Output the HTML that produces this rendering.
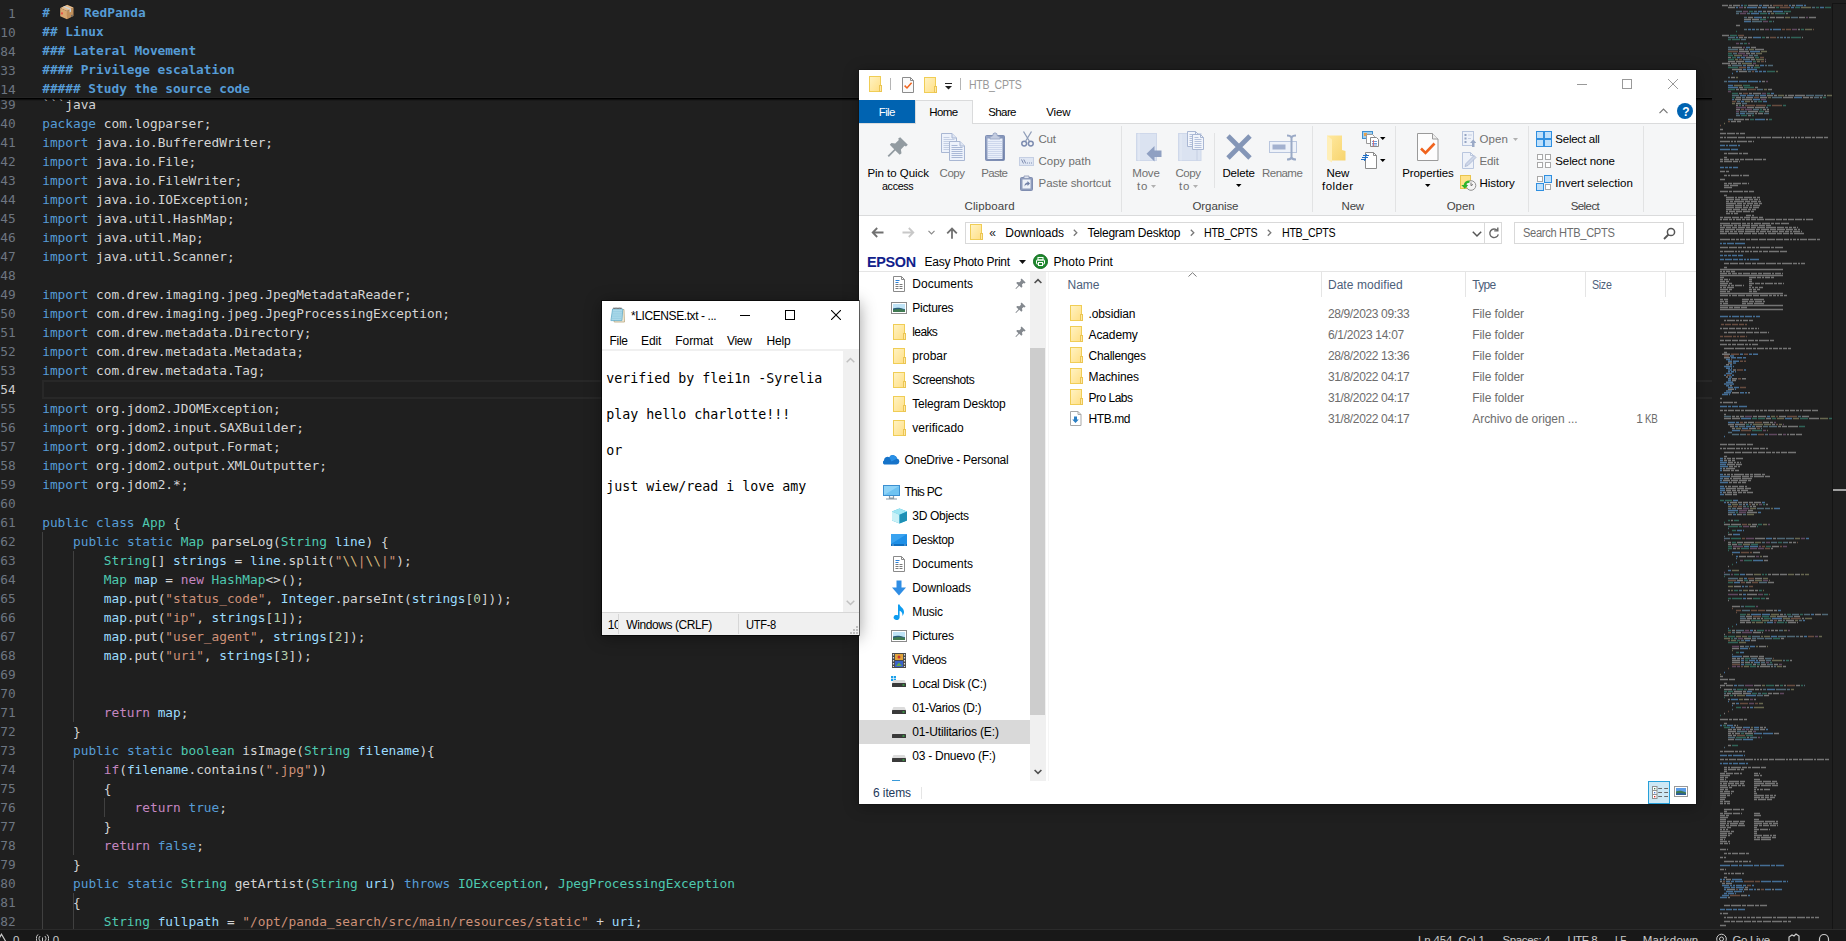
<!DOCTYPE html>
<html lang="en"><head><meta charset="utf-8"><title>screenshot</title>
<style>
html,body{margin:0;padding:0}
body{width:1846px;height:941px;background:#1f1f1f;position:relative;overflow:hidden;font-family:"Liberation Sans",sans-serif}
.b{position:absolute;display:block}
.t{position:absolute;white-space:pre;display:block}
.s{font-family:"Liberation Sans","DejaVu Sans",sans-serif}
.m{font-family:"Liberation Mono","DejaVu Sans Mono",monospace}
.d{font-family:"DejaVu Sans Mono","Liberation Mono",monospace}

#ed{position:absolute;left:0;top:0;width:1846px;height:941px;overflow:hidden}
.ln,.cl{position:absolute;margin:0;font-family:"DejaVu Sans Mono","Liberation Mono",monospace;font-size:12.8px;line-height:19px;height:19px;letter-spacing:-0.009px;white-space:pre}
.ln{left:-30px;width:45.61px;text-align:right;color:#6e7681}
.cl{left:42.2px;color:#d4d4d4}
.cl i{font-style:normal}
.cl.h{font-weight:700;color:#569cd6}
i.k{color:#569cd6} i.y{color:#4ec9b0} i.q{color:#ce9178} i.c{color:#c586c0} i.v{color:#9cdcfe} i.n{color:#b5cea8} i.e{color:#d7ba7d}
#sticky{position:absolute;left:0;top:0;width:1712px;height:98px;box-sizing:border-box;border-bottom:1px solid #242424;background:#1f1f1f;overflow:hidden}
#stsh{position:absolute;left:0;top:98px;width:1712px;height:3px;background:linear-gradient(#000 0,#000 33%,rgba(0,0,0,.55) 34%,rgba(0,0,0,.55) 66%,rgba(0,0,0,.16) 67%)}

#np{background:#fff;box-shadow:0 0 0 1px rgba(0,0,0,.57),0 2px 16px 0 rgba(0,0,0,.42);overflow:hidden;z-index:3}

#ex{background:#fff;box-shadow:0 0 0 1px rgba(0,0,0,.16),0 2px 14px 0 rgba(0,0,0,.35);overflow:hidden;z-index:2}
</style></head>
<body>
<div id="ed">
<div class="b" style="left:42px;top:380px;width:1670px;height:19px;border:2px solid #282828;border-right:none;box-sizing:border-box;"></div>
<div class="b" style="left:42px;top:532px;width:1px;height:399px;background:#404040;"></div>
<div class="b" style="left:73px;top:551px;width:1px;height:171px;background:#404040;"></div>
<div class="b" style="left:73px;top:760px;width:1px;height:95px;background:#404040;"></div>
<div class="b" style="left:73px;top:893px;width:1px;height:38px;background:#404040;"></div>
<div class="b" style="left:104px;top:798px;width:1px;height:19px;background:#404040;"></div>
<div class="ln" style="top:95.00px;color:#6e7681">439</div>
<pre class="cl" style="top:95.00px">```java</pre>
<div class="ln" style="top:114.00px;color:#6e7681">440</div>
<pre class="cl" style="top:114.00px"><i class="k">package</i> com.logparser;</pre>
<div class="ln" style="top:133.00px;color:#6e7681">441</div>
<pre class="cl" style="top:133.00px"><i class="k">import</i> java.io.BufferedWriter;</pre>
<div class="ln" style="top:152.00px;color:#6e7681">442</div>
<pre class="cl" style="top:152.00px"><i class="k">import</i> java.io.File;</pre>
<div class="ln" style="top:171.00px;color:#6e7681">443</div>
<pre class="cl" style="top:171.00px"><i class="k">import</i> java.io.FileWriter;</pre>
<div class="ln" style="top:190.00px;color:#6e7681">444</div>
<pre class="cl" style="top:190.00px"><i class="k">import</i> java.io.IOException;</pre>
<div class="ln" style="top:209.00px;color:#6e7681">445</div>
<pre class="cl" style="top:209.00px"><i class="k">import</i> java.util.HashMap;</pre>
<div class="ln" style="top:228.00px;color:#6e7681">446</div>
<pre class="cl" style="top:228.00px"><i class="k">import</i> java.util.Map;</pre>
<div class="ln" style="top:247.00px;color:#6e7681">447</div>
<pre class="cl" style="top:247.00px"><i class="k">import</i> java.util.Scanner;</pre>
<div class="ln" style="top:266.00px;color:#6e7681">448</div>
<div class="ln" style="top:285.00px;color:#6e7681">449</div>
<pre class="cl" style="top:285.00px"><i class="k">import</i> com.drew.imaging.jpeg.JpegMetadataReader;</pre>
<div class="ln" style="top:304.00px;color:#6e7681">450</div>
<pre class="cl" style="top:304.00px"><i class="k">import</i> com.drew.imaging.jpeg.JpegProcessingException;</pre>
<div class="ln" style="top:323.00px;color:#6e7681">451</div>
<pre class="cl" style="top:323.00px"><i class="k">import</i> com.drew.metadata.Directory;</pre>
<div class="ln" style="top:342.00px;color:#6e7681">452</div>
<pre class="cl" style="top:342.00px"><i class="k">import</i> com.drew.metadata.Metadata;</pre>
<div class="ln" style="top:361.00px;color:#6e7681">453</div>
<pre class="cl" style="top:361.00px"><i class="k">import</i> com.drew.metadata.Tag;</pre>
<div class="ln" style="top:380.00px;color:#ccc">454</div>
<div class="ln" style="top:399.00px;color:#6e7681">455</div>
<pre class="cl" style="top:399.00px"><i class="k">import</i> org.jdom2.JDOMException;</pre>
<div class="ln" style="top:418.00px;color:#6e7681">456</div>
<pre class="cl" style="top:418.00px"><i class="k">import</i> org.jdom2.input.SAXBuilder;</pre>
<div class="ln" style="top:437.00px;color:#6e7681">457</div>
<pre class="cl" style="top:437.00px"><i class="k">import</i> org.jdom2.output.Format;</pre>
<div class="ln" style="top:456.00px;color:#6e7681">458</div>
<pre class="cl" style="top:456.00px"><i class="k">import</i> org.jdom2.output.XMLOutputter;</pre>
<div class="ln" style="top:475.00px;color:#6e7681">459</div>
<pre class="cl" style="top:475.00px"><i class="k">import</i> org.jdom2.*;</pre>
<div class="ln" style="top:494.00px;color:#6e7681">460</div>
<div class="ln" style="top:513.00px;color:#6e7681">461</div>
<pre class="cl" style="top:513.00px"><i class="k">public</i> <i class="k">class</i> <i class="y">App</i> {</pre>
<div class="ln" style="top:532.00px;color:#6e7681">462</div>
<pre class="cl" style="top:532.00px">    <i class="k">public</i> <i class="k">static</i> <i class="y">Map</i> parseLog(<i class="y">String</i> <i class="v">line</i>) {</pre>
<div class="ln" style="top:551.00px;color:#6e7681">463</div>
<pre class="cl" style="top:551.00px">        <i class="y">String</i>[] <i class="v">strings</i> = <i class="v">line</i>.split(<i class="q">&quot;</i><i class="e">\\</i><i class="q">|</i><i class="e">\\</i><i class="q">|&quot;</i>);</pre>
<div class="ln" style="top:570.00px;color:#6e7681">464</div>
<pre class="cl" style="top:570.00px">        <i class="y">Map</i> <i class="v">map</i> = <i class="c">new</i> <i class="y">HashMap</i>&lt;&gt;();</pre>
<div class="ln" style="top:589.00px;color:#6e7681">465</div>
<pre class="cl" style="top:589.00px">        <i class="v">map</i>.put(<i class="q">&quot;status_code&quot;</i>, <i class="v">Integer</i>.parseInt(<i class="v">strings</i>[<i class="n">0</i>]));</pre>
<div class="ln" style="top:608.00px;color:#6e7681">466</div>
<pre class="cl" style="top:608.00px">        <i class="v">map</i>.put(<i class="q">&quot;ip&quot;</i>, <i class="v">strings</i>[<i class="n">1</i>]);</pre>
<div class="ln" style="top:627.00px;color:#6e7681">467</div>
<pre class="cl" style="top:627.00px">        <i class="v">map</i>.put(<i class="q">&quot;user_agent&quot;</i>, <i class="v">strings</i>[<i class="n">2</i>]);</pre>
<div class="ln" style="top:646.00px;color:#6e7681">468</div>
<pre class="cl" style="top:646.00px">        <i class="v">map</i>.put(<i class="q">&quot;uri&quot;</i>, <i class="v">strings</i>[<i class="n">3</i>]);</pre>
<div class="ln" style="top:665.00px;color:#6e7681">469</div>
<div class="ln" style="top:684.00px;color:#6e7681">470</div>
<div class="ln" style="top:703.00px;color:#6e7681">471</div>
<pre class="cl" style="top:703.00px">        <i class="c">return</i> <i class="v">map</i>;</pre>
<div class="ln" style="top:722.00px;color:#6e7681">472</div>
<pre class="cl" style="top:722.00px">    }</pre>
<div class="ln" style="top:741.00px;color:#6e7681">473</div>
<pre class="cl" style="top:741.00px">    <i class="k">public</i> <i class="k">static</i> <i class="y">boolean</i> isImage(<i class="y">String</i> <i class="v">filename</i>){</pre>
<div class="ln" style="top:760.00px;color:#6e7681">474</div>
<pre class="cl" style="top:760.00px">        <i class="c">if</i>(<i class="v">filename</i>.contains(<i class="q">&quot;.jpg&quot;</i>))</pre>
<div class="ln" style="top:779.00px;color:#6e7681">475</div>
<pre class="cl" style="top:779.00px">        {</pre>
<div class="ln" style="top:798.00px;color:#6e7681">476</div>
<pre class="cl" style="top:798.00px">            <i class="c">return</i> <i class="k">true</i>;</pre>
<div class="ln" style="top:817.00px;color:#6e7681">477</div>
<pre class="cl" style="top:817.00px">        }</pre>
<div class="ln" style="top:836.00px;color:#6e7681">478</div>
<pre class="cl" style="top:836.00px">        <i class="c">return</i> <i class="k">false</i>;</pre>
<div class="ln" style="top:855.00px;color:#6e7681">479</div>
<pre class="cl" style="top:855.00px">    }</pre>
<div class="ln" style="top:874.00px;color:#6e7681">480</div>
<pre class="cl" style="top:874.00px">    <i class="k">public</i> <i class="k">static</i> <i class="y">String</i> getArtist(<i class="y">String</i> <i class="v">uri</i>) <i class="k">throws</i> <i class="y">IOException</i>, <i class="y">JpegProcessingException</i></pre>
<div class="ln" style="top:893.00px;color:#6e7681">481</div>
<pre class="cl" style="top:893.00px">    {</pre>
<div class="ln" style="top:912.00px;color:#6e7681">482</div>
<pre class="cl" style="top:912.00px">        <i class="y">String</i> <i class="v">fullpath</i> = <i class="q">&quot;/opt/panda_search/src/main/resources/static&quot;</i> + <i class="v">uri</i>;</pre>
<div id="sticky">
<div class="ln" style="top:4.00px">1</div>
<pre class="cl h" style="top:3.00px"># </pre>
<pre class="cl h" style="top:3.00px;left:84.1px">RedPanda</pre>
<div class="ln" style="top:23.00px">210</div>
<pre class="cl h" style="top:22.00px">## Linux</pre>
<div class="ln" style="top:42.00px">284</div>
<pre class="cl h" style="top:41.00px">### Lateral Movement</pre>
<div class="ln" style="top:61.00px">333</div>
<pre class="cl h" style="top:60.00px">#### Privilege escalation</pre>
<div class="ln" style="top:80.00px">414</div>
<pre class="cl h" style="top:79.00px">##### Study the source code</pre>
<svg class="b" style="left:58.2px;top:3.2px;" width="17.5" height="17.5" viewBox="0 0 16 16"><title>📦</title><path d="M1.5 4.2 8.6 1l6 2.6v8.6L8 15.4 1.5 12.2z" fill="#1a1a1a"/>
<path d="M2 4.6 8.2 7.3v7.6L2 12z" fill="#d9a871"/><path d="M8.2 7.3 14.2 4.2v7.7l-6 3z" fill="#c08f5a"/>
<path d="M2 4.6 8.4 1.6l5.8 2.6-6 3.1z" fill="#e6bb8a"/><path d="M4.6 3.4 10.6 6v2.6l1.3-.7V5.3L6 2.7z" fill="#c9d3dc"/>
<rect x="3" y="8.6" width="1.3" height="1.8" fill="#e33"/><path d="M12 11.2l1.4-.7v1.6l-1.4.7z" fill="#666"/></svg>
</div>
<div id="stsh"></div>
</div>
<svg class="b" style="left:0;top:0" width="1846" height="930" viewBox="0 0 1846 930"><path d="M1722 5.5h6M1729 5.5h3M1733 5.5h7M1748 5.5h10M1763 5.5h6M1770 5.5h2M1792 5.5h3M1728 7.5h7M1744 7.5h2M1758 7.5h3M1768 7.5h7M1763 11.5h3M1767 11.5h5M1786 13.5h2M1748 17.5h5M1763 17.5h3M1770 17.5h5M1776 17.5h8M1799 17.5h6M1809 17.5h7M1744 19.5h7M1752 19.5h7M1736 25.5h4M1760 29.5h4M1798 29.5h2M1722 35.5h7M1739 37.5h4M1744 37.5h3M1748 37.5h4M1766 37.5h3M1802 37.5h1M1732 47.5h10M1751 47.5h5M1739 49.5h5M1755 49.5h9M1739 51.5h10M1746 53.5h4M1751 53.5h4M1728 57.5h3M1746 57.5h8M1751 59.5h4M1728 61.5h7M1736 61.5h8M1765 61.5h1M1722 63.5h8M1731 63.5h6M1738 63.5h3M1728 65.5h3M1747 65.5h7M1732 69.5h10M1739 71.5h8M1731 77.5h4M1762 81.5h3M1739 87.5h4M1755 87.5h3M1736 89.5h3M1740 89.5h7M1768 89.5h4M1739 93.5h3M1749 93.5h3M1753 93.5h8M1767 95.5h6M1774 95.5h3M1785 95.5h2M1788 95.5h6M1795 95.5h10M1824 95.5h2M1736 97.5h5M1746 97.5h7M1760 97.5h7M1783 97.5h10M1803 97.5h6M1810 97.5h3M1820 97.5h2M1735 99.5h6M1742 99.5h10M1751 101.5h2M1736 103.5h5M1736 105.5h2M1742 105.5h2M1747 107.5h7M1755 107.5h10M1736 109.5h4M1763 109.5h3M1767 109.5h2M1748 111.5h10M1765 111.5h4M1755 113.5h2M1758 113.5h5M1748 115.5h3M1734 119.5h10M1745 119.5h4M1766 119.5h2M1731 121.5h5M1737 121.5h4M1720 129.5h3M1720 133.5h6M1727 133.5h8M1736 133.5h3M1740 133.5h5M1720 137.5h3M1724 137.5h2M1727 137.5h10M1738 137.5h7M1746 137.5h10M1757 137.5h3M1761 137.5h10M1772 137.5h10M1783 137.5h2M1786 137.5h4M1791 137.5h3M1795 137.5h2M1798 137.5h2M1801 137.5h3M1805 137.5h6M1812 137.5h3M1816 137.5h7M1824 137.5h4M1720 141.5h10M1731 141.5h2M1734 141.5h2M1737 141.5h10M1748 141.5h4M1753 141.5h1M1724 153.5h3M1728 153.5h10M1739 153.5h3M1743 153.5h5M1724 157.5h3M1720 159.5h3M1724 159.5h5M1730 159.5h4M1735 159.5h4M1740 159.5h4M1745 159.5h8M1754 159.5h8M1763 159.5h3M1720 161.5h3M1724 161.5h8M1733 161.5h5M1739 161.5h1M1720 171.5h5M1726 171.5h3M1724 175.5h3M1728 175.5h2M1731 175.5h8M1740 175.5h2M1743 175.5h6M1720 179.5h5M1724 183.5h3M1728 183.5h4M1733 183.5h8M1742 183.5h5M1748 183.5h1M1724 185.5h5M1730 185.5h8M1724 187.5h8M1720 191.5h8M1729 191.5h3M1733 191.5h10M1744 191.5h4M1749 191.5h5M1724 195.5h3M1726 197.5h8M1735 197.5h2M1738 197.5h5M1744 197.5h8M1753 197.5h3M1757 197.5h3M1726 199.5h8M1735 199.5h5M1741 199.5h7M1749 199.5h4M1754 199.5h4M1759 199.5h1M1726 201.5h3M1730 201.5h3M1734 201.5h10M1745 201.5h5M1751 201.5h6M1758 201.5h3M1726 203.5h10M1737 203.5h5M1743 203.5h3M1747 203.5h6M1754 203.5h4M1759 203.5h3M1726 205.5h8M1735 205.5h7M1743 205.5h2M1746 205.5h3M1750 205.5h2M1753 205.5h7M1726 207.5h8M1735 207.5h7M1743 207.5h5M1749 207.5h3M1753 207.5h6M1726 209.5h6M1733 209.5h7M1741 209.5h6M1748 209.5h3M1752 209.5h4M1726 211.5h2M1729 211.5h6M1736 211.5h6M1743 211.5h7M1751 211.5h3M1726 213.5h4M1731 213.5h2M1734 213.5h4M1746 215.5h5M1752 215.5h2M1720 217.5h3M1724 217.5h7M1732 217.5h7M1740 217.5h3M1744 217.5h6M1751 217.5h7M1759 217.5h4M1720 219.5h2M1723 219.5h5M1729 219.5h3M1733 219.5h2M1736 219.5h5M1742 219.5h3M1746 219.5h4M1751 219.5h5M1757 219.5h7M1765 219.5h10M1776 219.5h6M1783 219.5h4M1788 219.5h6M1795 219.5h7M1803 219.5h2M1806 219.5h7M1720 223.5h10M1731 223.5h10M1742 223.5h4M1747 223.5h3M1751 223.5h2M1754 223.5h7M1762 223.5h8M1771 223.5h3M1775 223.5h5M1781 223.5h8M1720 225.5h2M1723 225.5h10M1734 225.5h3M1738 225.5h3M1742 225.5h8M1751 225.5h7M1759 225.5h6M1766 225.5h5M1720 227.5h5M1726 227.5h5M1732 227.5h5M1738 227.5h7M1746 227.5h4M1751 227.5h5M1757 227.5h8M1766 227.5h10M1777 227.5h7M1785 227.5h3M1789 227.5h3M1793 227.5h3M1797 227.5h1M1720 229.5h4M1725 229.5h10M1736 229.5h8M1745 229.5h10M1756 229.5h4M1761 229.5h8M1770 229.5h6M1777 229.5h8M1786 229.5h7M1794 229.5h3M1798 229.5h2M1720 231.5h4M1725 231.5h4M1730 231.5h3M1734 231.5h3M1738 231.5h6M1745 231.5h10M1756 231.5h3M1760 231.5h6M1767 231.5h4M1772 231.5h6M1779 231.5h5M1785 231.5h4M1790 231.5h2M1793 231.5h7M1801 231.5h1M1720 233.5h7M1728 233.5h10M1739 233.5h4M1744 233.5h7M1752 233.5h5M1758 233.5h6M1765 233.5h2M1768 233.5h8M1777 233.5h5M1783 233.5h6M1790 233.5h3M1794 233.5h10M1720 239.5h10M1731 239.5h4M1736 239.5h3M1740 239.5h5M1746 239.5h4M1751 239.5h7M1759 239.5h7M1767 239.5h8M1776 239.5h7M1784 239.5h5M1790 239.5h2M1793 239.5h3M1797 239.5h2M1800 239.5h7M1808 239.5h8M1817 239.5h3M1720 247.5h8M1729 247.5h8M1738 247.5h4M1743 247.5h3M1747 247.5h4M1752 247.5h3M1756 247.5h3M1760 247.5h10M1771 247.5h3M1775 247.5h8M1720 251.5h3M1724 251.5h10M1735 251.5h2M1738 251.5h2M1741 251.5h3M1745 251.5h4M1750 251.5h2M1753 251.5h5M1759 251.5h3M1763 251.5h5M1769 251.5h10M1780 251.5h7M1724 263.5h5M1730 263.5h8M1739 263.5h5M1745 263.5h6M1752 263.5h4M1757 263.5h8M1766 263.5h10M1777 263.5h4M1782 263.5h10M1793 263.5h4M1798 263.5h2M1801 263.5h4M1724 267.5h3M1720 269.5h63M1720 271.5h2M1723 271.5h2M1726 271.5h4M1731 271.5h4M1720 273.5h7M1728 273.5h3M1732 273.5h5M1738 273.5h4M1743 273.5h7M1751 273.5h6M1758 273.5h4M1763 273.5h8M1772 273.5h2M1775 273.5h6M1782 273.5h1M1720 275.5h63M1720 277.5h4M1749 277.5h7M1757 277.5h4M1762 277.5h2M1765 277.5h5M1771 277.5h3M1720 279.5h3M1724 279.5h4M1729 279.5h1M1749 279.5h3M1720 281.5h5M1726 281.5h3M1749 281.5h3M1720 283.5h8M1729 283.5h3M1749 283.5h5M1755 283.5h5M1761 283.5h3M1765 283.5h8M1774 283.5h3M1778 283.5h4M1783 283.5h1M1720 285.5h7M1728 285.5h2M1731 285.5h3M1735 285.5h7M1743 285.5h1M1749 285.5h3M1720 287.5h2M1723 287.5h3M1727 287.5h7M1749 287.5h2M1752 287.5h2M1755 287.5h3M1759 287.5h4M1720 289.5h8M1729 289.5h3M1749 289.5h3M1753 289.5h3M1757 289.5h3M1720 291.5h6M1727 291.5h3M1749 291.5h3M1753 291.5h4M1720 293.5h63M1720 295.5h8M1729 295.5h2M1732 295.5h5M1738 295.5h7M1746 295.5h6M1753 295.5h6M1760 295.5h8M1769 295.5h3M1773 295.5h3M1777 295.5h2M1780 295.5h3M1784 295.5h3M1720 299.5h3M1724 299.5h4M1742 299.5h7M1750 299.5h3M1754 299.5h10M1720 301.5h4M1725 301.5h3M1742 301.5h6M1749 301.5h5M1755 301.5h7M1763 301.5h2M1720 303.5h2M1723 303.5h5M1742 303.5h4M1747 303.5h6M1754 303.5h10M1720 305.5h63M1720 307.5h8M1729 307.5h4M1734 307.5h6M1741 307.5h6M1720 309.5h63M1724 320.5h2M1727 320.5h8M1736 320.5h3M1740 320.5h2M1743 320.5h5M1749 320.5h4M1720 328.5h2M1723 328.5h5M1729 328.5h6M1736 328.5h5M1742 328.5h5M1748 328.5h2M1751 328.5h3M1755 328.5h2M1758 328.5h1M1724 332.5h3M1728 332.5h8M1737 332.5h8M1746 332.5h7M1754 332.5h5M1760 332.5h7M1768 332.5h1M1720 340.5h4M1725 340.5h6M1732 340.5h6M1739 340.5h8M1748 340.5h6M1755 340.5h3M1759 340.5h10M1770 340.5h4M1720 344.5h7M1728 344.5h3M1732 344.5h4M1737 344.5h7M1745 344.5h3M1749 344.5h2M1752 344.5h6M1724 348.5h10M1735 348.5h10M1746 348.5h6M1753 348.5h3M1757 348.5h7M1765 348.5h3M1769 348.5h3M1773 348.5h5M1779 348.5h3M1783 348.5h4M1788 348.5h3M1724 352.5h3M1722 354.25h8M1724 357.75h6M1728 363h4M1726 364.75h3M1733 370h3M1726 377h2M1732 378.75h5M1742 378.75h4M1732 380.5h4M1730 385.75h2M1728 389.25h6M1732 392.75h7M1748 392.75h2M1720 398.5h2M1720 402.5h2M1723 402.5h10M1734 402.5h3M1720 410.5h3M1724 410.5h3M1728 410.5h6M1735 410.5h5M1741 410.5h3M1745 410.5h10M1756 410.5h3M1760 410.5h3M1764 410.5h3M1768 410.5h7M1776 410.5h8M1785 410.5h4M1790 410.5h5M1796 410.5h3M1800 410.5h2M1803 410.5h8M1812 410.5h6M1724 414.5h2M1732 416.5h3M1736 416.5h3M1740 416.5h4M1753 416.5h4M1758 416.5h8M1779 416.5h7M1802 416.5h7M1724 418.5h7M1732 418.5h8M1766 418.5h5M1809 418.5h10M1744 422.5h3M1748 422.5h6M1763 422.5h6M1770 422.5h3M1728 424.5h6M1735 424.5h10M1772 424.5h3M1730 426.5h4M1756 426.5h6M1778 426.5h3M1782 426.5h5M1788 426.5h10M1732 428.5h3M1749 428.5h7M1778 434.5h4M1787 434.5h2M1790 434.5h5M1796 434.5h6M1720 444.5h7M1728 444.5h7M1736 444.5h10M1747 444.5h6M1720 448.5h2M1723 448.5h3M1727 448.5h8M1736 448.5h4M1741 448.5h2M1744 448.5h2M1747 448.5h2M1750 448.5h2M1753 448.5h6M1760 448.5h5M1766 448.5h2M1724 452.5h10M1735 452.5h6M1742 452.5h10M1753 452.5h4M1758 452.5h7M1766 452.5h5M1772 452.5h3M1776 452.5h4M1781 452.5h6M1788 452.5h8M1724 456.5h3M1724 458.5h2M1727 458.5h4M1732 458.5h3M1736 458.5h7M1724 460.5h3M1728 460.5h3M1732 460.5h3M1728 462.5h5M1734 462.5h2M1737 462.5h2M1740 462.5h1M1727 464.5h8M1736 464.5h6M1729 466.5h4M1734 466.5h3M1738 466.5h2M1723 468.5h2M1726 468.5h9M1723 470.5h7M1731 470.5h3M1735 470.5h4M1724 474.5h2M1727 474.5h3M1731 474.5h2M1734 474.5h10M1745 474.5h4M1750 474.5h3M1754 474.5h7M1762 474.5h3M1731 476.5h10M1742 476.5h7M1750 476.5h3M1754 476.5h10M1765 476.5h5M1724 478.5h5M1730 478.5h2M1733 478.5h8M1742 478.5h10M1723 480.5h7M1731 480.5h7M1739 480.5h8M1748 480.5h3M1729 482.5h3M1733 482.5h4M1738 482.5h3M1742 482.5h4M1725 486.5h2M1728 486.5h3M1732 486.5h6M1739 486.5h5M1745 486.5h2M1726 488.5h10M1737 488.5h7M1745 488.5h6M1726 490.5h5M1732 490.5h4M1737 490.5h3M1741 490.5h7M1723 492.5h3M1727 492.5h5M1733 492.5h4M1738 492.5h4M1743 492.5h3M1747 492.5h6M1725 494.5h7M1733 494.5h4M1727 502.5h2M1730 502.5h7M1738 502.5h4M1743 502.5h5M1749 502.5h4M1754 502.5h7M1743 504.5h2M1752 504.5h3M1766 504.5h2M1750 506.5h2M1753 506.5h3M1737 508.5h5M1748 510.5h5M1747 512.5h10M1728 514.5h4M1737 514.5h5M1731 520.5h2M1724 524.5h6M1731 524.5h10M1752 524.5h5M1750 526.5h6M1728 534.5h4M1755 538.5h10M1773 538.5h3M1728 542.5h3M1737 542.5h6M1744 542.5h10M1789 542.5h3M1793 542.5h3M1728 544.5h3M1732 544.5h5M1772 546.5h7M1733 548.5h3M1771 548.5h2M1753 552.5h7M1739 556.5h7M1747 556.5h8M1763 556.5h5M1764 560.5h4M1728 566.5h1M1746 574.5h7M1768 574.5h3M1772 574.5h7M1780 574.5h7M1795 574.5h5M1755 578.5h7M1737 580.5h6M1749 580.5h5M1746 582.5h5M1768 582.5h6M1734 586.5h7M1728 590.5h2M1749 590.5h5M1755 590.5h3M1739 594.5h3M1747 594.5h10M1747 598.5h5M1766 598.5h3M1728 600.5h1M1732 606.5h8M1766 610.5h7M1774 610.5h3M1780 614.5h3M1815 614.5h6M1746 616.5h6M1777 616.5h10M1794 616.5h6M1747 618.5h5M1753 618.5h3M1757 618.5h3M1761 618.5h2M1802 618.5h2M1740 620.5h10M1770 620.5h3M1778 620.5h4M1786 620.5h8M1740 622.5h5M1746 622.5h5M1788 622.5h8M1797 622.5h1M1732 630.5h3M1754 630.5h2M1771 630.5h3M1775 630.5h3M1736 632.5h5M1753 632.5h8M1762 632.5h1M1724 634.5h1M1800 636.5h3M1744 638.5h7M1781 638.5h3M1751 640.5h5M1740 646.5h4M1759 646.5h7M1732 648.5h7M1743 656.5h6M1750 656.5h8M1759 656.5h5M1732 658.5h4M1737 658.5h3M1741 658.5h3M1758 658.5h6M1732 660.5h8M1759 660.5h6M1790 660.5h2M1732 662.5h8M1741 662.5h3M1745 662.5h5M1751 662.5h2M1753 664.5h3M1761 664.5h5M1774 664.5h4M1757 666.5h2M1760 666.5h10M1771 666.5h2M1783 666.5h3M1720 676.5h3M1720 679.5h8M1729 679.5h6M1724 683.5h3M1720 685.5h5M1726 685.5h7M1754 685.5h7M1775 685.5h4M1784 685.5h2M1796 685.5h4M1720 687.5h1M1724 689.5h8M1748 689.5h6M1755 689.5h4M1760 689.5h2M1734 691.5h8M1743 691.5h3M1727 693.5h4M1732 693.5h10M1743 693.5h8M1768 693.5h4M1773 693.5h6M1724 695.5h5M1734 695.5h2M1764 695.5h5M1728 699.5h2M1744 699.5h5M1754 699.5h2M1732 703.5h3M1747 707.5h2M1724 713.5h1M1720 719.5h8M1729 719.5h3M1733 719.5h5M1739 719.5h4M1744 719.5h3M1724 723.5h3M1734 725.5h2M1737 725.5h1M1736 727.5h6M1760 727.5h3M1764 727.5h2M1728 729.5h4M1733 729.5h3M1737 729.5h4M1750 729.5h3M1760 729.5h5M1728 731.5h8M1748 731.5h4M1728 733.5h3M1732 733.5h2M1735 733.5h5M1745 733.5h8M1774 733.5h5M1728 735.5h4M1733 735.5h3M1747 737.5h2M1728 739.5h6M1728 745.5h3M1720 751.5h3M1724 751.5h10M1735 751.5h3M1739 751.5h3M1743 751.5h2M1720 759.5h4M1725 759.5h3M1729 759.5h7M1737 759.5h7M1745 759.5h8M1754 759.5h2M1757 759.5h2M1760 759.5h2M1763 759.5h5M1769 759.5h5M1775 759.5h10M1786 759.5h2M1789 759.5h3M1793 759.5h5M1799 759.5h3M1803 759.5h10M1814 759.5h2M1817 759.5h7M1825 759.5h4M1724 767.5h3M1728 767.5h2M1731 767.5h10M1742 767.5h5M1748 767.5h3M1752 767.5h8M1761 767.5h5M1724 769.5h3M1728 769.5h8M1737 769.5h3M1741 769.5h3M1724 771.5h3M1720 773.5h5M1726 773.5h7M1734 773.5h5M1740 773.5h2M1754 773.5h4M1759 773.5h1M1720 775.5h10M1754 775.5h5M1760 775.5h2M1720 777.5h4M1725 777.5h3M1720 779.5h4M1725 779.5h1M1754 779.5h6M1720 781.5h8M1729 781.5h10M1740 781.5h5M1754 781.5h8M1763 781.5h8M1772 781.5h5M1720 783.5h2M1723 783.5h4M1728 783.5h6M1735 783.5h4M1740 783.5h4M1754 783.5h10M1765 783.5h10M1776 783.5h2M1720 785.5h7M1728 785.5h2M1731 785.5h6M1738 785.5h3M1742 785.5h3M1754 785.5h6M1761 785.5h10M1772 785.5h6M1720 787.5h8M1729 787.5h3M1754 787.5h3M1720 789.5h4M1725 789.5h3M1754 789.5h2M1757 789.5h2M1760 789.5h3M1764 789.5h6M1720 791.5h3M1724 791.5h6M1731 791.5h3M1754 791.5h2M1720 793.5h10M1731 793.5h1M1754 793.5h3M1720 795.5h6M1727 795.5h3M1754 795.5h10M1765 795.5h4M1770 795.5h3M1774 795.5h2M1720 797.5h6M1754 797.5h6M1761 797.5h3M1765 797.5h4M1770 797.5h5M1720 799.5h5M1754 799.5h3M1758 799.5h8M1767 799.5h5M1720 801.5h3M1724 801.5h6M1720 803.5h3M1724 803.5h2M1727 803.5h3M1724 811.5h3M1720 813.5h3M1724 813.5h8M1733 813.5h7M1741 813.5h1M1754 813.5h6M1720 815.5h5M1726 815.5h3M1754 815.5h7M1720 817.5h8M1720 819.5h6M1754 819.5h5M1720 821.5h6M1727 821.5h5M1733 821.5h6M1740 821.5h5M1754 821.5h10M1765 821.5h10M1776 821.5h2M1720 823.5h6M1727 823.5h2M1730 823.5h8M1739 823.5h5M1754 823.5h8M1763 823.5h5M1769 823.5h3M1773 823.5h5M1720 825.5h5M1726 825.5h3M1730 825.5h7M1738 825.5h7M1754 825.5h4M1759 825.5h3M1763 825.5h6M1770 825.5h6M1777 825.5h1M1720 827.5h6M1727 827.5h4M1754 827.5h3M1720 829.5h2M1723 829.5h2M1726 829.5h2M1754 829.5h5M1760 829.5h8M1769 829.5h1M1720 831.5h10M1731 831.5h3M1754 831.5h3M1720 833.5h7M1728 833.5h4M1754 833.5h3M1720 835.5h7M1728 835.5h2M1754 835.5h8M1763 835.5h6M1770 835.5h2M1773 835.5h3M1720 837.5h6M1754 837.5h2M1757 837.5h3M1761 837.5h10M1772 837.5h4M1720 839.5h3M1724 839.5h1M1754 839.5h6M1761 839.5h10M1720 841.5h7M1728 841.5h2M1720 843.5h3M1724 843.5h4M1729 843.5h1M1724 809.5h8M1733 809.5h7M1741 809.5h3M1720 849.5h6M1727 849.5h1M1724 853.5h3M1728 853.5h3M1732 853.5h6M1739 853.5h6M1746 853.5h3M1720 857.5h3M1724 857.5h2M1724 861.5h10M1735 861.5h3M1739 861.5h3M1743 861.5h5M1749 861.5h2M1720 869.5h4M1725 869.5h1M1724 873.5h3M1728 873.5h2M1731 873.5h3M1735 873.5h6M1742 873.5h2M1724 877.5h3M1726 879.5h5M1720 881.5h2M1722 883.5h3M1726 883.5h6M1745 887.5h3M1727 889.5h8M1744 889.5h4M1757 889.5h3M1772 889.5h2M1741 895.5h6M1728 897.5h2M1724 905.5h6M1731 905.5h10M1742 905.5h4M1747 905.5h7M1755 905.5h4M1760 905.5h7M1720 913.5h2M1723 913.5h5M1724 917.5h2M1727 917.5h6M1734 917.5h3M1738 917.5h4M1743 917.5h3M1747 917.5h3M1751 917.5h4M1756 917.5h5M1762 917.5h10M1773 917.5h3M1777 917.5h10M1788 917.5h8M1797 917.5h8M1806 917.5h4M1811 917.5h3M1815 917.5h4M1724 921.5h6M1731 921.5h4M1736 921.5h7M1744 921.5h7M1752 921.5h4M1757 921.5h5M1763 921.5h8M1772 921.5h10M1783 921.5h4M1788 921.5h3M1720 925.5h6" stroke="#a4a4a4" stroke-width="1.35" stroke-opacity="0.64" fill="none"/><path d="M1741 5.5h2M1759 5.5h3M1789 5.5h2M1796 5.5h7M1804 5.5h2M1736 7.5h2M1747 7.5h10M1762 7.5h5M1791 7.5h3M1820 7.5h4M1758 11.5h4M1773 11.5h10M1751 13.5h8M1768 13.5h2M1754 17.5h8M1744 21.5h7M1748 29.5h3M1752 29.5h3M1770 29.5h2M1773 29.5h8M1736 37.5h2M1753 37.5h8M1784 37.5h2M1746 47.5h4M1750 51.5h10M1737 57.5h3M1741 57.5h4M1745 61.5h7M1743 65.5h3M1760 65.5h4M1747 67.5h3M1751 67.5h2M1743 69.5h3M1747 69.5h10M1736 71.5h2M1755 71.5h3M1759 71.5h3M1763 71.5h3M1732 73.5h1M1728 81.5h10M1739 81.5h8M1748 81.5h10M1759 81.5h2M1728 85.5h5M1728 87.5h10M1771 93.5h3M1740 95.5h6M1747 95.5h7M1760 95.5h6M1794 97.5h8M1732 99.5h2M1753 99.5h7M1741 101.5h3M1763 101.5h4M1740 113.5h5M1755 119.5h10M1720 145.5h5M1726 145.5h2M1729 145.5h8M1738 145.5h2M1720 149.5h10M1731 149.5h7M1720 167.5h4M1725 167.5h3M1729 167.5h3M1733 167.5h5M1720 243.5h2M1723 243.5h3M1727 243.5h7M1735 243.5h10M1720 255.5h3M1724 255.5h3M1728 255.5h3M1732 255.5h5M1738 255.5h5M1720 259.5h4M1725 259.5h7M1733 259.5h5M1739 259.5h4M1744 259.5h2M1747 259.5h2M1750 259.5h9M1720 316.5h8M1729 316.5h2M1732 316.5h7M1740 316.5h4M1745 316.5h7M1753 316.5h2M1756 316.5h4M1740 354.25h3M1749 354.25h3M1753 354.25h5M1730 356h4M1731 357.75h5M1737 357.75h5M1743 357.75h3M1726 359.5h4M1728 361.25h4M1733 361.25h6M1733 363h3M1730 364.75h2M1724 366.5h8M1733 366.5h1M1726 368.25h4M1731 368.25h1M1728 370h4M1744 370h2M1728 371.75h2M1731 371.75h3M1735 371.75h1M1726 373.5h6M1724 375.25h2M1732 375.25h2M1729 377h3M1728 378.75h3M1728 380.5h3M1726 382.25h7M1724 384h10M1726 385.75h3M1728 387.5h5M1734 387.5h5M1735 389.25h1M1726 391h6M1724 392.75h7M1740 392.75h4M1745 392.75h2M1722 394.5h6M1729 394.5h1M1720 406.5h7M1728 406.5h3M1732 406.5h6M1739 406.5h8M1767 416.5h3M1741 418.5h10M1785 418.5h7M1728 422.5h7M1736 422.5h3M1735 426.5h3M1746 426.5h5M1752 426.5h3M1742 428.5h6M1732 430.5h8M1751 434.5h6M1724 436.5h1M1720 458.5h3M1720 460.5h3M1720 462.5h7M1720 464.5h6M1720 466.5h8M1720 468.5h2M1720 470.5h2M1720 474.5h3M1720 476.5h10M1720 478.5h3M1720 480.5h2M1720 482.5h8M1720 486.5h4M1720 488.5h5M1720 490.5h5M1720 492.5h2M1720 494.5h4M1733 500.5h5M1724 502.5h2M1762 502.5h3M1728 504.5h3M1746 504.5h2M1774 508.5h6M1728 510.5h10M1758 512.5h3M1733 514.5h3M1737 530.5h5M1743 530.5h1M1733 534.5h7M1766 538.5h6M1806 538.5h3M1744 546.5h5M1750 546.5h8M1732 552.5h8M1736 556.5h2M1753 560.5h10M1736 562.5h1M1728 570.5h3M1740 574.5h5M1744 578.5h3M1734 582.5h6M1742 586.5h2M1743 594.5h3M1743 598.5h3M1778 610.5h3M1751 614.5h10M1762 614.5h8M1811 614.5h3M1772 618.5h10M1803 620.5h2M1767 622.5h6M1736 624.5h1M1728 628.5h1M1750 630.5h3M1771 636.5h6M1804 636.5h3M1745 640.5h5M1750 646.5h5M1740 648.5h8M1740 652.5h4M1732 656.5h10M1741 660.5h3M1749 660.5h6M1756 660.5h2M1754 662.5h6M1741 664.5h3M1724 672.5h1M1734 685.5h3M1767 689.5h8M1747 691.5h5M1746 695.5h10M1731 699.5h7M1728 701.5h1M1736 703.5h3M1732 705.5h1M1750 707.5h3M1720 725.5h2M1727 725.5h6M1731 727.5h4M1743 727.5h7M1754 727.5h5M1766 729.5h2M1754 733.5h8M1763 733.5h10M1743 739.5h10M1720 755.5h7M1728 755.5h4M1733 755.5h10M1744 755.5h1M1720 763.5h2M1723 763.5h5M1729 763.5h3M1733 763.5h5M1739 763.5h6M1746 763.5h2M1720 865.5h10M1731 865.5h7M1739 865.5h3M1743 865.5h10M1754 865.5h5M1760 865.5h10M1771 865.5h4M1776 865.5h8M1720 879.5h2M1723 879.5h2M1732 879.5h10M1726 881.5h4M1731 881.5h3M1735 881.5h8M1761 881.5h10M1772 881.5h10M1783 881.5h3M1787 881.5h1M1722 885.5h7M1730 885.5h2M1733 885.5h2M1736 885.5h6M1743 885.5h3M1752 885.5h2M1724 887.5h6M1731 887.5h4M1736 887.5h8M1724 889.5h2M1739 889.5h4M1749 889.5h4M1754 889.5h2M1765 889.5h6M1775 889.5h7M1726 891.5h7M1734 891.5h8M1743 891.5h1M1724 893.5h3M1728 893.5h6M1735 893.5h1M1722 895.5h7M1748 895.5h2M1720 897.5h7M1720 909.5h5M1726 909.5h6M1733 909.5h4M1738 909.5h7" stroke="#5a9bd8" stroke-width="1.35" stroke-opacity="0.64" fill="none"/><path d="M1744 5.5h3M1776 7.5h3M1795 7.5h5M1816 7.5h3M1825 7.5h6M1749 11.5h4M1784 11.5h7M1760 13.5h7M1775 13.5h10M1767 17.5h2M1760 19.5h6M1769 21.5h3M1801 29.5h3M1736 31.5h1M1730 35.5h7M1762 37.5h3M1791 37.5h10M1728 39.5h3M1732 39.5h8M1744 43.5h3M1728 53.5h4M1728 55.5h5M1732 57.5h4M1755 57.5h4M1728 59.5h6M1753 61.5h3M1728 67.5h10M1754 67.5h6M1767 71.5h8M1743 85.5h7M1744 87.5h10M1728 89.5h7M1732 93.5h6M1767 93.5h3M1732 97.5h3M1823 97.5h3M1758 101.5h4M1739 105.5h2M1767 105.5h4M1783 105.5h3M1760 109.5h2M1759 111.5h5M1741 115.5h6M1752 115.5h2M1750 119.5h4M1769 119.5h3M1752 418.5h5M1758 418.5h7M1772 418.5h4M1800 418.5h8M1829 418.5h3M1746 424.5h3M1799 426.5h6M1752 430.5h10M1720 500.5h4M1725 500.5h7M1763 504.5h2M1747 506.5h2M1736 512.5h2M1728 520.5h2M1734 520.5h5M1724 522.5h1M1758 524.5h4M1728 526.5h10M1739 526.5h3M1757 526.5h1M1732 530.5h4M1728 532.5h1M1731 538.5h10M1732 542.5h4M1778 542.5h4M1738 544.5h4M1751 544.5h7M1728 546.5h4M1766 546.5h5M1728 548.5h4M1741 548.5h8M1728 550.5h1M1744 560.5h8M1732 564.5h1M1734 574.5h5M1762 574.5h2M1765 574.5h2M1724 576.5h1M1744 580.5h4M1728 582.5h5M1734 590.5h4M1759 590.5h3M1764 594.5h4M1728 598.5h3M1732 598.5h10M1753 598.5h7M1761 598.5h4M1745 606.5h10M1740 614.5h6M1787 614.5h4M1800 614.5h3M1762 616.5h7M1764 618.5h7M1751 620.5h10M1764 622.5h2M1777 622.5h7M1785 622.5h2M1732 626.5h1M1728 630.5h3M1757 630.5h7M1724 636.5h3M1728 636.5h7M1748 636.5h3M1731 638.5h2M1773 638.5h7M1737 640.5h3M1728 642.5h10M1736 652.5h3M1745 658.5h5M1745 660.5h3M1786 660.5h3M1770 662.5h2M1745 664.5h7M1757 664.5h3M1750 666.5h6M1766 685.5h8M1780 685.5h3M1801 685.5h2M1737 689.5h6M1744 689.5h3M1724 691.5h3M1728 691.5h5M1752 693.5h5M1762 693.5h5M1730 695.5h3M1724 697.5h1M1736 707.5h5M1720 715.5h1M1723 725.5h3M1724 727.5h6M1741 733.5h3M1746 735.5h7M1736 737.5h10M1761 737.5h1M1732 745.5h6" stroke="#3fa890" stroke-width="1.3" stroke-opacity="0.5" fill="none"/><path d="M1773 5.5h10M1784 5.5h4M1780 7.5h10M1782 29.5h3M1786 29.5h5M1813 29.5h1M1738 35.5h6M1770 37.5h6M1728 51.5h10M1760 57.5h4M1739 59.5h3M1761 61.5h3M1739 67.5h7M1752 71.5h2M1748 89.5h8M1743 93.5h5M1754 97.5h5M1732 101.5h4M1745 105.5h10M1756 105.5h10M1772 105.5h10M1741 109.5h3M1728 121.5h2M1720 125.5h1M1721 324.5h3M1725 324.5h6M1732 324.5h6M1739 324.5h5M1745 324.5h2M1720 336.5h3M1724 336.5h8M1733 336.5h3M1737 336.5h2M1740 336.5h5M1746 336.5h1M1731 354.25h8M1744 354.25h4M1724 356h5M1731 359.5h1M1740 361.25h3M1744 361.25h2M1737 370h6M1727 375.25h4M1738 378.75h3M1740 387.5h6M1776 416.5h2M1787 416.5h10M1740 422.5h3M1755 422.5h7M1776 424.5h2M1757 428.5h3M1741 430.5h10M1747 434.5h3M1758 434.5h6M1749 504.5h2M1733 506.5h4M1738 506.5h4M1742 524.5h5M1742 538.5h3M1797 542.5h1M1762 546.5h3M1780 546.5h2M1765 548.5h5M1741 552.5h8M1750 552.5h2M1748 578.5h6M1728 580.5h8M1741 582.5h4M1752 582.5h6M1749 586.5h4M1769 594.5h1M1732 608.5h1M1736 610.5h5M1751 610.5h6M1758 610.5h7M1736 612.5h1M1753 616.5h8M1791 618.5h10M1774 620.5h3M1728 632.5h3M1808 636.5h6M1728 640.5h2M1773 658.5h1M1732 664.5h8M1741 666.5h2M1728 668.5h1M1787 685.5h8M1740 703.5h8M1755 703.5h3M1728 711.5h1M1737 735.5h8M1723 881.5h2M1744 881.5h10M1755 881.5h5M1747 885.5h4M1736 889.5h2M1761 889.5h3M1730 895.5h10" stroke="#b07a60" stroke-width="1.3" stroke-opacity="0.5" fill="none"/><path d="M1739 7.5h4M1743 11.5h5M1740 13.5h6M1806 17.5h2M1763 21.5h5M1765 29.5h4M1792 29.5h5M1736 43.5h3M1748 43.5h2M1743 47.5h2M1738 53.5h7M1743 55.5h5M1765 59.5h1M1753 63.5h3M1766 81.5h2M1728 91.5h3M1762 93.5h4M1761 99.5h5M1736 107.5h10M1745 109.5h7M1736 111.5h3M1745 416.5h7M1774 422.5h2M1783 424.5h1M1763 430.5h3M1769 434.5h8M1783 434.5h3M1759 504.5h3M1743 508.5h6M1739 510.5h8M1739 512.5h7M1768 524.5h2M1743 526.5h6M1746 538.5h8M1801 538.5h4M1724 540.5h1M1766 542.5h4M1733 546.5h10M1759 546.5h2M1783 546.5h4M1750 548.5h7M1758 548.5h6M1756 556.5h3M1740 560.5h3M1724 572.5h1M1731 574.5h2M1763 580.5h5M1728 594.5h10M1758 594.5h5M1756 606.5h2M1774 622.5h2M1745 630.5h4M1765 630.5h2M1768 630.5h2M1788 630.5h2M1742 632.5h10M1815 636.5h3M1738 638.5h5M1732 646.5h7M1766 662.5h3M1779 664.5h3M1732 666.5h4M1737 666.5h3M1745 685.5h8M1780 693.5h4M1750 699.5h3M1749 703.5h5M1742 707.5h4M1742 729.5h3M1746 729.5h3M1753 731.5h3M1758 737.5h2" stroke="#a070a0" stroke-width="1.3" stroke-opacity="0.5" fill="none"/><path d="M1801 7.5h10M1771 13.5h3M1785 17.5h5M1805 29.5h7M1749 49.5h5M1761 51.5h6M1756 53.5h6M1734 55.5h8M1735 59.5h3M1756 59.5h8M1757 61.5h3M1742 63.5h10M1755 65.5h4M1776 71.5h2M1736 77.5h2M1734 85.5h8M1764 89.5h3M1778 95.5h6M1827 95.5h5M1768 97.5h3M1745 101.5h5M1732 103.5h3M1724 123.5h1M1771 416.5h4M1777 418.5h7M1793 418.5h6M1820 418.5h8M1753 424.5h10M1764 424.5h7M1779 424.5h3M1736 428.5h5M1767 430.5h1M1732 504.5h6M1756 504.5h2M1728 506.5h4M1750 508.5h6M1771 508.5h2M1747 514.5h7M1748 524.5h3M1763 524.5h4M1795 538.5h5M1755 542.5h6M1743 544.5h7M1737 548.5h3M1732 554.5h1M1760 556.5h2M1732 570.5h7M1754 574.5h7M1788 574.5h6M1801 574.5h3M1805 574.5h4M1739 578.5h4M1763 578.5h5M1755 580.5h7M1769 580.5h1M1728 586.5h5M1731 590.5h2M1743 590.5h5M1763 590.5h1M1747 614.5h3M1771 614.5h8M1770 616.5h6M1783 618.5h7M1805 618.5h7M1762 620.5h7M1795 620.5h3M1752 622.5h3M1756 622.5h7M1784 630.5h3M1736 636.5h5M1742 636.5h5M1761 636.5h2M1764 636.5h6M1819 636.5h3M1724 638.5h6M1731 640.5h5M1739 642.5h7M1756 646.5h2M1767 646.5h1M1749 648.5h1M1732 650.5h1M1772 660.5h10M1744 666.5h5M1777 666.5h5M1720 674.5h1M1762 685.5h3M1791 689.5h3M1737 695.5h8M1739 699.5h4M1759 703.5h4M1754 707.5h10M1751 727.5h2" stroke="#b0b080" stroke-width="1.3" stroke-opacity="0.5" fill="none"/><path d="M1812 7.5h3M1736 11.5h6M1754 11.5h3M1736 13.5h3M1747 13.5h3M1744 17.5h3M1791 17.5h7M1752 21.5h10M1773 21.5h1M1744 29.5h3M1756 29.5h3M1728 37.5h7M1777 37.5h2M1780 37.5h3M1787 37.5h3M1741 39.5h5M1740 43.5h3M1728 47.5h3M1728 49.5h10M1745 49.5h3M1733 53.5h4M1749 55.5h4M1754 55.5h4M1743 59.5h7M1732 65.5h10M1765 65.5h2M1768 65.5h5M1748 71.5h3M1728 77.5h2M1724 81.5h3M1757 89.5h6M1732 95.5h7M1755 95.5h4M1806 95.5h8M1815 95.5h8M1742 97.5h3M1772 97.5h10M1814 97.5h5M1737 101.5h3M1754 101.5h3M1742 103.5h5M1766 107.5h2M1753 109.5h6M1740 111.5h7M1736 113.5h3M1746 113.5h8M1764 113.5h5M1736 115.5h4M1728 119.5h5M1724 416.5h7M1798 416.5h3M1750 424.5h2M1739 426.5h6M1763 426.5h5M1769 426.5h8M1761 428.5h1M1728 432.5h4M1732 434.5h7M1740 434.5h6M1765 434.5h3M1739 504.5h3M1743 506.5h3M1728 508.5h3M1732 508.5h4M1757 508.5h7M1765 508.5h5M1728 512.5h7M1743 514.5h3M1728 528.5h1M1724 536.5h1M1724 538.5h6M1777 538.5h8M1786 538.5h8M1762 542.5h3M1771 542.5h6M1783 542.5h5M1736 558.5h1M1724 574.5h6M1728 578.5h10M1759 582.5h8M1745 586.5h3M1739 590.5h3M1741 606.5h3M1742 610.5h8M1784 614.5h2M1792 614.5h7M1804 614.5h6M1822 614.5h6M1740 616.5h5M1788 616.5h5M1740 618.5h6M1783 620.5h2M1799 620.5h3M1736 630.5h8M1779 630.5h4M1732 632.5h3M1752 636.5h8M1778 636.5h8M1787 636.5h8M1796 636.5h3M1734 638.5h3M1752 638.5h4M1757 638.5h7M1765 638.5h7M1741 640.5h3M1745 646.5h4M1732 654.5h1M1751 658.5h6M1765 658.5h7M1766 660.5h5M1783 660.5h2M1761 662.5h4M1767 664.5h6M1774 666.5h2M1738 685.5h6M1804 685.5h1M1733 689.5h3M1763 689.5h3M1776 689.5h10M1787 689.5h3M1724 693.5h2M1758 693.5h3M1757 695.5h6M1732 709.5h1M1754 729.5h5M1737 731.5h10M1728 737.5h7M1750 737.5h7M1735 739.5h7M1724 747.5h1" stroke="#7fb0cc" stroke-width="1.3" stroke-opacity="0.5" fill="none"/></svg>
<div class="b" style="left:1832px;top:3px;width:1px;height:926px;background:#141414;"></div>
<div class="b" style="left:1832px;top:3px;width:14px;height:1px;background:#141414;"></div>
<div class="b" style="left:1833px;top:489px;width:13px;height:2px;background:#a0a0a0;"></div>
<div class="b" style="left:0px;top:929px;width:1846px;height:12px;background:#181818;border-top:1px solid #2b2b2b;box-sizing:border-box;"></div>
<span class="t s" style="left:13.00px;top:932.31px;font-size:11.5px;line-height:16px;color:#ccc;">0</span>
<span class="t s" style="left:52.80px;top:932.31px;font-size:11.5px;line-height:16px;color:#ccc;">0</span>
<span class="t s" style="left:1418.00px;top:932.31px;font-size:11.5px;line-height:16px;letter-spacing:-0.134px;color:#ccc;">Ln 454, Col 1</span>
<span class="t s" style="left:1502.60px;top:932.31px;font-size:11.5px;line-height:16px;letter-spacing:-0.405px;color:#ccc;">Spaces: 4</span>
<span class="t s" style="left:1567.50px;top:932.31px;font-size:11.5px;line-height:16px;letter-spacing:-0.595px;color:#ccc;">UTF-8</span>
<span class="t s" style="left:1614.90px;top:932.31px;font-size:11.5px;line-height:16px;letter-spacing:-0.350px;color:#ccc;transform:scaleX(0.8645);transform-origin:0 0;">LF</span>
<span class="t s" style="left:1642.70px;top:932.31px;font-size:11.5px;line-height:16px;letter-spacing:0.350px;color:#ccc;">Markdown</span>
<span class="t s" style="left:1732.40px;top:932.31px;font-size:11.5px;line-height:16px;letter-spacing:-0.305px;color:#ccc;">Go Live</span>
<svg class="b" style="left:0px;top:933px;" width="12" height="12" viewBox="0 0 12 12"><path d="M1.500 1.200 7.500 11.500H-4.500z" stroke="#ccc" stroke-width="1.200" fill="none"/></svg>
<svg class="b" style="left:36px;top:933px;" width="13" height="12" viewBox="0 0 13 12"><path d="M2 9.500a5.500 5.500 0 0 1 0-8M11 9.500a5.500 5.500 0 0 0 0-8M4.200 8a3.200 3.200 0 0 1 0-5M8.800 8a3.200 3.200 0 0 0 0-5" stroke="#ccc" stroke-width="1" fill="none"/><path d="M6.500 4.500v8" stroke="#ccc"/></svg>
<svg class="b" style="left:1716px;top:933px;" width="11" height="11" viewBox="0 0 11 11"><circle cx="5.500" cy="6" r="4.800" stroke="#ccc" stroke-width="1" fill="none"/><circle cx="5.500" cy="6" r="2" stroke="#ccc" stroke-width="1" fill="none"/></svg>
<svg class="b" style="left:1788px;top:933px;" width="13" height="11" viewBox="0 0 13 11"><path d="M1 8V4l3-2 2 1 2-2 3 2v5" stroke="#ccc" stroke-width="1.200" fill="none"/></svg>
<svg class="b" style="left:1818px;top:933px;" width="12" height="11" viewBox="0 0 12 11"><path d="M1.500 11V6a4.500 4.500 0 0 1 9 0v5" stroke="#ccc" stroke-width="1.200" fill="none"/></svg>
<div id="ex" class="b" style="left:859px;top:70px;width:837px;height:734px">
<svg class="b" style="left:10px;top:6px;" width="13" height="16" viewBox="0 0 13 16"><defs><linearGradient id="fg" x1="0" y1="0" x2="1" y2="1"><stop offset="0" stop-color="#fff3c4"/><stop offset="1" stop-color="#ffdf85"/></linearGradient></defs>
<rect x=".5" y=".5" width="11" height="15" fill="url(#fg)" stroke="#f0cd55" stroke-width="1"/>
<rect x="10.5" y="9.5" width="2" height="6" fill="#ffe9a6" stroke="#ebc553" stroke-width="1"/></svg>
<div class="b" style="left:31px;top:8px;width:1px;height:12px;background:#b5b5b5;"></div>
<svg class="b" style="left:43px;top:7px;" width="12" height="16" viewBox="0 0 12 16"><path d="M.5.5h8l3 3v12H.5z" fill="#fafafa" stroke="#8c8c8c"/><path d="M8.5.5v3h3" fill="none" stroke="#8c8c8c"/><path d="M2.6 8.6 5 11 9.6 5.8" stroke="#f0641e" stroke-width="1.5" fill="none"/></svg>
<svg class="b" style="left:65px;top:7px;" width="13" height="16" viewBox="0 0 13 16"><defs><linearGradient id="fg" x1="0" y1="0" x2="1" y2="1"><stop offset="0" stop-color="#fff3c4"/><stop offset="1" stop-color="#ffdf85"/></linearGradient></defs>
<rect x=".5" y=".5" width="11" height="15" fill="url(#fg)" stroke="#f0cd55" stroke-width="1"/>
<rect x="10.5" y="9.5" width="2" height="6" fill="#ffe9a6" stroke="#ebc553" stroke-width="1"/></svg>
<div class="b" style="left:86px;top:13px;width:7px;height:1px;background:#222;"></div>
<svg class="b" style="left:86px;top:16px;" width="7" height="3.5" viewBox="0 0 7 3.5"><path d="M0 0h7L3.5 3.5z" fill="#222"/></svg>
<div class="b" style="left:101px;top:8px;width:1px;height:12px;background:#b5b5b5;"></div>
<span class="t s" style="left:109.80px;top:6.64px;font-size:12px;line-height:17px;letter-spacing:-0.350px;color:#999;transform:scaleX(0.8750);transform-origin:0 0;">HTB_CPTS</span>
<div class="b" style="left:718px;top:14px;width:10px;height:1px;background:#999;"></div>
<div class="b" style="left:763px;top:9px;width:10px;height:10px;border:1px solid #999;box-sizing:border-box;"></div>
<svg class="b" style="left:809px;top:9px;" width="10" height="10" viewBox="0 0 10 10"><path d="M0 0 10 10M10 0 0 10" stroke="#999" stroke-width="1"/></svg>
<div class="b" style="left:0px;top:30px;width:56px;height:23px;background:#0063b1;"></div>
<span class="t s" style="left:19.70px;top:34.31px;font-size:11.5px;line-height:16px;letter-spacing:-0.576px;color:#fff;">File</span>
<div class="b" style="left:56px;top:30px;width:58px;height:24px;background:#f5f6f7;border:1px solid #dadbdc;border-bottom:none;box-sizing:border-box;"></div>
<span class="t s" style="left:70.20px;top:34.31px;font-size:11.5px;line-height:16px;letter-spacing:-0.561px;color:#000;">Home</span>
<span class="t s" style="left:129.30px;top:34.31px;font-size:11.5px;line-height:16px;letter-spacing:-0.620px;color:#000;">Share</span>
<span class="t s" style="left:187.20px;top:34.31px;font-size:11.5px;line-height:16px;letter-spacing:-0.116px;color:#000;">View</span>
<svg class="b" style="left:800px;top:38px;" width="9" height="6" viewBox="0 0 9 6"><path d="M.5 5.2 4.5 1.2 8.5 5.2" stroke="#777" stroke-width="1.2" fill="none"/></svg>
<div class="b" style="left:818px;top:33px;width:16px;height:16px;background:#0063b1;border-radius:50%;"></div>
<span class="t s" style="left:823.20px;top:33.64px;font-size:12px;line-height:17px;color:#fff;font-weight:700;">?</span>
<div class="b" style="left:0px;top:53px;width:837px;height:93px;background:#f5f6f7;border-top:1px solid #dadbdc;border-bottom:1px solid #dadbdc;box-sizing:border-box;"></div>
<div class="b" style="left:57px;top:53px;width:56px;height:1px;background:#f5f6f7;"></div>
<div class="b" style="left:262px;top:56px;width:1px;height:86px;background:#e2e3e4;"></div>
<div class="b" style="left:453px;top:56px;width:1px;height:86px;background:#e2e3e4;"></div>
<div class="b" style="left:536px;top:56px;width:1px;height:86px;background:#e2e3e4;"></div>
<div class="b" style="left:669px;top:56px;width:1px;height:86px;background:#e2e3e4;"></div>
<div class="b" style="left:784px;top:56px;width:1px;height:86px;background:#e2e3e4;"></div>
<div class="b" style="left:355px;top:63px;width:1px;height:55px;background:#e2e3e4;"></div>
<span class="t s" style="left:105.50px;top:128.31px;font-size:11.5px;line-height:16px;letter-spacing:0.123px;color:#444;">Clipboard</span>
<span class="t s" style="left:333.50px;top:128.31px;font-size:11.5px;line-height:16px;letter-spacing:-0.095px;color:#444;">Organise</span>
<span class="t s" style="left:482.50px;top:128.31px;font-size:11.5px;line-height:16px;letter-spacing:-0.167px;color:#444;">New</span>
<span class="t s" style="left:587.70px;top:128.31px;font-size:11.5px;line-height:16px;letter-spacing:-0.043px;color:#444;">Open</span>
<span class="t s" style="left:711.70px;top:128.31px;font-size:11.5px;line-height:16px;letter-spacing:-0.572px;color:#444;">Select</span>
<svg class="b" style="left:28px;top:66px;" width="22" height="22" viewBox="0 0 22 22"><path d="M13.2 1.2 20.8 8.8 19 10.4l-1.5-.6-3.6 3.6.6 3.8-1.8 1.6-4.4-4.4-6.4 6.6-1.3-1.3 6.6-6.4L2.8 8.7l1.6-1.8 3.8.6L11.8 4l-.6-1.5z" fill="#929ba1"/></svg>
<span class="t s" style="left:8.40px;top:95.31px;font-size:11.5px;line-height:16px;letter-spacing:-0.038px;color:#000;">Pin to Quick</span>
<span class="t s" style="left:23.10px;top:108.31px;font-size:11.5px;line-height:16px;letter-spacing:-0.350px;color:#000;transform:scaleX(0.9284);transform-origin:0 0;">access</span>
<svg class="b" style="left:82px;top:63px;" width="16" height="20" viewBox="0 0 16 20"><path d="M.5.5h10.500l4.500 4.500v14.500H.5z" fill="#edf2fb" stroke="#a9b7d3"/><path d="M11 .5v4.500h4.500" fill="#dfe6f4" stroke="#a9b7d3"/><path d="M2.500 4.500h6M2.500 6.500h11M2.500 8.500h11M2.500 10.500h11M2.500 12.500h11M2.500 14.500h11M2.500 16.500h11" stroke="#c4cfe4" stroke-width="1"/></svg>
<svg class="b" style="left:90px;top:71px;" width="16" height="20" viewBox="0 0 16 20"><path d="M.5.5h10.500l4.500 4.500v14.500H.5z" fill="#edf2fb" stroke="#a9b7d3"/><path d="M11 .5v4.500h4.500" fill="#dfe6f4" stroke="#a9b7d3"/><path d="M2.500 4.500h6M2.500 6.500h11M2.500 8.500h11M2.500 10.500h11M2.500 12.500h11M2.500 14.500h11M2.500 16.500h11" stroke="#a9b8d6" stroke-width="1"/></svg>
<span class="t s" style="left:80.60px;top:95.31px;font-size:11.5px;line-height:16px;letter-spacing:-0.480px;color:#707070;">Copy</span>
<svg class="b" style="left:126px;top:62px;" width="20" height="29" viewBox="0 0 20 29"><defs><linearGradient id="pb" x1="0" y1="0" x2="1" y2="1"><stop offset="0" stop-color="#9aa9ca"/><stop offset="1" stop-color="#6f80a8"/></linearGradient></defs><rect x=".5" y="3.5" width="19" height="25" rx="1" fill="url(#pb)" stroke="#7f8fb4"/><rect x="2.5" y="6.5" width="15" height="20.5" fill="#e9effa"/><path d="M3 9.5h14M3 11.5h14M3 13.5h14M3 15.5h14M3 17.5h14M3 19.5h14M3 21.5h14M3 23.5h14M3 25.5h14" stroke="#cdd7ec"/><path d="M5 7V5l3-1.500V1.800Q10 -.2 12 1.800V3.500L15 5v2z" fill="#c3cce0" stroke="#95a3c2" stroke-width=".8"/></svg>
<span class="t s" style="left:122.30px;top:95.31px;font-size:11.5px;line-height:16px;letter-spacing:-0.726px;color:#707070;">Paste</span>
<svg class="b" style="left:162px;top:61px;" width="13" height="16" viewBox="0 0 13 16"><path d="M2.5.5 8.3 10M10.5.5 4.7 10" stroke="#8f9db8" stroke-width="1.3" fill="none"/><circle cx="3.2" cy="12.6" r="2.4" fill="none" stroke="#7d8cb0" stroke-width="1.5"/><circle cx="9.8" cy="12.6" r="2.4" fill="none" stroke="#7d8cb0" stroke-width="1.5"/></svg>
<span class="t s" style="left:179.60px;top:61.31px;font-size:11.5px;line-height:16px;letter-spacing:-0.297px;color:#707070;">Cut</span>
<svg class="b" style="left:160px;top:87px;" width="15" height="9" viewBox="0 0 15 9"><rect x=".5" y=".5" width="14" height="8" fill="#dfe6f3" stroke="#c5cfe3"/><path d="M2.5 2.5 4.5 6.5M4.8 2.5 6.8 6.5" stroke="#7f8db0" stroke-width="1"/><path d="M8 6h1M10 6h1M12 6h1" stroke="#7f8db0"/></svg>
<span class="t s" style="left:179.60px;top:83.31px;font-size:11.5px;line-height:16px;letter-spacing:-0.029px;color:#707070;">Copy path</span>
<svg class="b" style="left:161px;top:105px;" width="13" height="16" viewBox="0 0 13 16"><rect x=".5" y="2.5" width="12" height="13" rx="1" fill="#8e9cbc" stroke="#7f8db0"/><rect x="2.5" y="4.5" width="8" height="9" fill="#eef2f9"/><path d="M4 1h5v2.5H4z" fill="#dfe5f0" stroke="#8996b4" stroke-width=".8"/><path d="M4.5 11.5c0-3 1.5-4 3-4V6l2.5 2.5L7.5 11V9.500c-1.200 0-2.200.5-3 2z" fill="#6f7fa6"/></svg>
<span class="t s" style="left:179.60px;top:105.31px;font-size:11.5px;line-height:16px;letter-spacing:-0.085px;color:#707070;">Paste shortcut</span>
<svg class="b" style="left:277px;top:63px;" width="27" height="29" viewBox="0 0 27 29"><rect x=".5" y=".5" width="20" height="27" fill="#dbe3f1" stroke="#cfd8ea"/><rect x="2.500" y=".5" width="1" height="27" fill="#e9eef7"/><path d="M25.500 17.500v6.500H18.500v4.500L10.500 20.800 18.500 13v4.500z" fill="#8fa0c2"/></svg>
<span class="t s" style="left:273.30px;top:95.31px;font-size:11.5px;line-height:16px;letter-spacing:-0.206px;color:#707070;">Move</span>
<span class="t s" style="left:278.10px;top:108.31px;font-size:11.5px;line-height:16px;letter-spacing:0.809px;color:#707070;">to</span>
<svg class="b" style="left:292px;top:115px;" width="5" height="3" viewBox="0 0 5 3"><path d="M0 0h5L2.5 3z" fill="#b0b0b0"/></svg>
<svg class="b" style="left:319px;top:61px;" width="27" height="31" viewBox="0 0 27 31"><rect x=".5" y="2.5" width="22.5" height="27" fill="#dbe3f1" stroke="#cfd8ea"/><rect x="18.5" y="17" width="1" height="12.5" fill="#c6d0e4"/><rect x="2.5" y="3" width="1" height="26.5" fill="#e6ecf6"/><g transform="translate(9,0)"><path d="M.5.5h8l3 3v12H.5z" fill="#f2f5fb" stroke="#a9b7d3"/><path d="M8.500.5v3h3" fill="none" stroke="#a9b7d3"/><path d="M2.500 3.500h4M2.500 5.500h7M2.500 7.500h7M2.500 9.500h7M2.500 11.500h7M2.500 13.500h7" stroke="#b4c1dc" stroke-width="1"/></g><g transform="translate(14,3)"><path d="M.5.5h8l3 3v12H.5z" fill="#f2f5fb" stroke="#a9b7d3"/><path d="M8.500.5v3h3" fill="none" stroke="#a9b7d3"/><path d="M2.500 3.500h4M2.500 5.500h7M2.500 7.500h7M2.500 9.500h7M2.500 11.500h7M2.500 13.500h7" stroke="#b4c1dc" stroke-width="1"/></g></svg>
<span class="t s" style="left:316.50px;top:95.31px;font-size:11.5px;line-height:16px;letter-spacing:-0.447px;color:#707070;">Copy</span>
<span class="t s" style="left:319.90px;top:108.31px;font-size:11.5px;line-height:16px;letter-spacing:1.009px;color:#707070;">to</span>
<svg class="b" style="left:334px;top:115px;" width="5" height="3" viewBox="0 0 5 3"><path d="M0 0h5L2.5 3z" fill="#b0b0b0"/></svg>
<svg class="b" style="left:367px;top:64px;" width="26" height="26" viewBox="0 0 26 26"><path d="M2 2 24 24M24 2 2 24" stroke="#8496b7" stroke-width="4.8"/></svg>
<span class="t s" style="left:363.50px;top:95.31px;font-size:11.5px;line-height:16px;letter-spacing:-0.189px;color:#000;">Delete</span>
<svg class="b" style="left:377px;top:114px;" width="5.5" height="3" viewBox="0 0 5.5 3"><path d="M0 0h5.5L2.75 3z" fill="#000"/></svg>
<svg class="b" style="left:410px;top:64px;" width="29" height="27" viewBox="0 0 29 27"><rect x=".5" y="7.500" width="27" height="11" fill="#eef2f9" stroke="#b9c6de"/><rect x="3.500" y="10.500" width="13" height="5" fill="#a3b1cf"/><path d="M18 1.500c2.500 0 4 .8 4.500 2 .5-1.200 2-2 4.500-2M18 25.500c2.500 0 4-.8 4.500-2 .5 1.200 2 2 4.500 2M22.500 3.500v20" stroke="#9aa9c6" stroke-width="2" fill="none"/></svg>
<span class="t s" style="left:403.10px;top:95.31px;font-size:11.5px;line-height:16px;letter-spacing:-0.554px;color:#707070;">Rename</span>
<svg class="b" style="left:467px;top:64px;" width="21" height="29" viewBox="0 0 21 29"><defs><linearGradient id="nf" x1="0" y1="0" x2="1" y2="1"><stop offset="0" stop-color="#ffe9a0"/><stop offset="1" stop-color="#f7d46e"/></linearGradient></defs>
<path d="M1 1.500h15v14.500l3.500 1v9.500H5z" fill="url(#nf)"/><path d="M1 1.500 6 5.500v23L1 25.500z" fill="#ffefb8"/></svg>
<span class="t s" style="left:467.60px;top:95.31px;font-size:11.5px;line-height:16px;letter-spacing:-0.167px;color:#000;">New</span>
<span class="t s" style="left:463.00px;top:108.31px;font-size:11.5px;line-height:16px;letter-spacing:0.448px;color:#000;">folder</span>
<svg class="b" style="left:503px;top:61px;" width="17" height="16" viewBox="0 0 17 16"><rect x=".5" y=".5" width="10" height="7" fill="#9fd0ee" stroke="#3f8fd0"/><rect x="2" y="2" width="3" height="3" fill="#e8a04a"/><path d="M4.500 3.500h6l2 2v7h-8z" fill="#fff" stroke="#9a9a9a"/><path d="M8.500 6.500h6l2 2v7h-8z" fill="#fff" stroke="#8a8a8a"/><path d="M10 10.500h5M10 12.500h5M10 14h5" stroke="#5b8fd9" stroke-width=".9"/><path d="M11.500 9v6.500" stroke="#e06060" stroke-width=".8"/></svg>
<svg class="b" style="left:521px;top:67px;" width="5.5" height="3" viewBox="0 0 5.5 3"><path d="M0 0h5.5L2.75 3z" fill="#000"/></svg>
<svg class="b" style="left:502px;top:82px;" width="17" height="17" viewBox="0 0 17 17"><path d="M4.500.5h8l3 3v13h-11z" fill="#fff" stroke="#8a8a8a"/><path d="M12.500.5v3h3" fill="none" stroke="#8a8a8a"/><path d="M2 3.500h6M1 5.500h6M0 7.500h5" stroke="#1e6fc8" stroke-width="1.100"/><path d="M5.500 2 3.500 9" stroke="#1e6fc8" stroke-width="1"/></svg>
<svg class="b" style="left:521px;top:89px;" width="5.5" height="3" viewBox="0 0 5.5 3"><path d="M0 0h5.5L2.75 3z" fill="#000"/></svg>
<svg class="b" style="left:558px;top:63px;" width="22" height="28" viewBox="0 0 22 28"><path d="M.5.5h15l5.500 5.500v21.500H.5z" fill="#fdfdfd" stroke="#9a9a9a"/><path d="M15.500.5v5.500h5.500" fill="#eee" stroke="#9a9a9a"/><path d="M4 15.500 8.500 20 17.500 10.500" stroke="#f0641e" stroke-width="2.600" fill="none"/></svg>
<span class="t s" style="left:543.30px;top:95.31px;font-size:11.5px;line-height:16px;letter-spacing:-0.113px;color:#000;">Properties</span>
<svg class="b" style="left:566px;top:114px;" width="5.5" height="3" viewBox="0 0 5.5 3"><path d="M0 0h5.5L2.75 3z" fill="#000"/></svg>
<svg class="b" style="left:603px;top:61px;" width="14" height="16" viewBox="0 0 14 16"><rect x=".5" y=".5" width="11" height="14" fill="#eef2f9" stroke="#b9c6de"/><path d="M2.500 3h2v2h-2zM2.500 6.500h2v2h-2zM2.500 10h2v2h-2z" fill="#96a5c4"/><path d="M6 4h4M6 7.500h3" stroke="#c5cfe3"/><path d="M10 16v-4H8l3.200-3.500L14.500 12h-2v4z" fill="#9aa9c6"/></svg>
<span class="t s" style="left:620.60px;top:61.31px;font-size:11.5px;line-height:16px;letter-spacing:0.057px;color:#707070;">Open</span>
<svg class="b" style="left:654px;top:68px;" width="5" height="3" viewBox="0 0 5 3"><path d="M0 0h5L2.5 3z" fill="#b0b0b0"/></svg>
<svg class="b" style="left:603px;top:82px;" width="15" height="17" viewBox="0 0 15 17"><path d="M.5.5h8l3 3v13h-11z" fill="#eef2f9" stroke="#b9c6de"/><path d="M8.500.5v3h3" fill="none" stroke="#b9c6de"/><path d="M3 14.500 4 11.500 12 3.500 14 5.500 6 13.500z" fill="#cdd6e8" stroke="#a9b6d2" stroke-width=".8"/></svg>
<span class="t s" style="left:620.60px;top:83.31px;font-size:11.5px;line-height:16px;letter-spacing:-0.171px;color:#707070;">Edit</span>
<svg class="b" style="left:601px;top:105px;" width="17" height="17" viewBox="0 0 17 17"><rect x=".5" y=".5" width="10" height="13" fill="#ffe38a" stroke="#e9c44f"/><circle cx="11" cy="10.500" r="4.800" fill="#f4f4f4" stroke="#8f8f8f"/><path d="M11 7.500v3.200l2-1.300" stroke="#666" stroke-width=".9" fill="none"/><path d="M9.500 5.500c-3.500 0-5.500 1.800-5.800 4.500H1.300l3.500 3.800L8.300 10H6c.3-1.500 1.500-2.300 3.500-2.300z" fill="#2db52d"/></svg>
<span class="t s" style="left:620.60px;top:105.31px;font-size:11.5px;line-height:16px;letter-spacing:-0.096px;color:#000;">History</span>
<svg class="b" style="left:677px;top:61px;" width="16" height="16" viewBox="0 0 16 16"><rect x="0.5" y="0.5" width="7" height="7" fill="#bfe0fb" stroke="#2f8fe0"/><rect x="8.5" y="0.5" width="7" height="7" fill="#bfe0fb" stroke="#2f8fe0"/><rect x="0.5" y="8.5" width="7" height="7" fill="#bfe0fb" stroke="#2f8fe0"/><rect x="8.5" y="8.5" width="7" height="7" fill="#bfe0fb" stroke="#2f8fe0"/></svg>
<span class="t s" style="left:696.30px;top:61.31px;font-size:11.5px;line-height:16px;letter-spacing:-0.241px;color:#000;">Select all</span>
<svg class="b" style="left:677px;top:83px;" width="16" height="16" viewBox="0 0 16 16"><rect x="1.5" y="1.5" width="5" height="5" fill="#fff" stroke="#a8a8a8"/><rect x="9.5" y="1.5" width="5" height="5" fill="#fff" stroke="#a8a8a8"/><rect x="1.5" y="9.5" width="5" height="5" fill="#fff" stroke="#a8a8a8"/><rect x="9.5" y="9.5" width="5" height="5" fill="#fff" stroke="#a8a8a8"/></svg>
<span class="t s" style="left:696.30px;top:83.31px;font-size:11.5px;line-height:16px;letter-spacing:-0.114px;color:#000;">Select none</span>
<svg class="b" style="left:677px;top:105px;" width="16" height="16" viewBox="0 0 16 16"><rect x="1.5" y="1.5" width="5" height="5" fill="#fff" stroke="#a8a8a8"/><rect x="8.5" y="0.5" width="7" height="7" fill="#bfe0fb" stroke="#2f8fe0"/><rect x="0.5" y="8.5" width="7" height="7" fill="#bfe0fb" stroke="#2f8fe0"/><rect x="9.5" y="9.5" width="5" height="5" fill="#fff" stroke="#a8a8a8"/></svg>
<span class="t s" style="left:696.30px;top:105.31px;font-size:11.5px;line-height:16px;letter-spacing:0.010px;color:#000;">Invert selection</span>
<svg class="b" style="left:12px;top:157px;" width="13" height="11" viewBox="0 0 13 11"><path d="M12.500 5.500H1.800M6.200 1 1.700 5.500 6.200 10" stroke="#707070" stroke-width="1.800" fill="none"/></svg>
<svg class="b" style="left:43px;top:157px;" width="13" height="11" viewBox="0 0 13 11"><g transform="translate(13,0) scale(-1,1)"><path d="M12.500 5.500H1.800M6.200 1 1.700 5.500 6.200 10" stroke="#c8c8c8" stroke-width="1.800" fill="none"/></g></svg>
<svg class="b" style="left:69px;top:160px;" width="7" height="5" viewBox="0 0 7 5"><path d="M.5 .8 3.500 3.800 6.500 .8" stroke="#8a8a8a" stroke-width="1.200" fill="none"/></svg>
<svg class="b" style="left:87px;top:157px;" width="12" height="12" viewBox="0 0 12 12"><path d="M6 11.800V1.800M1.200 6.300 6 1.500l4.800 4.800" stroke="#707070" stroke-width="1.800" fill="none"/></svg>
<div class="b" style="left:106px;top:152px;width:520px;height:22px;background:#fff;border:1px solid #d9d9d9;box-sizing:border-box;"></div>
<div class="b" style="left:625px;top:152px;width:18px;height:22px;background:#fff;border:1px solid #d9d9d9;box-sizing:border-box;"></div>
<svg class="b" style="left:111px;top:154px;" width="13" height="16" viewBox="0 0 13 16"><defs><linearGradient id="fg" x1="0" y1="0" x2="1" y2="1"><stop offset="0" stop-color="#fff3c4"/><stop offset="1" stop-color="#ffdf85"/></linearGradient></defs>
<rect x=".5" y=".5" width="11" height="15" fill="url(#fg)" stroke="#f0cd55" stroke-width="1"/>
<rect x="10.5" y="9.5" width="2" height="6" fill="#ffe9a6" stroke="#ebc553" stroke-width="1"/></svg>
<span class="t s" style="left:130.20px;top:154.64px;font-size:12px;line-height:17px;color:#222;">«</span>
<span class="t s" style="left:146.30px;top:154.64px;font-size:12px;line-height:17px;letter-spacing:-0.083px;color:#000;">Downloads</span>
<svg class="b" style="left:214px;top:159px;" width="5" height="8" viewBox="0 0 5 8"><path d="M.8 .8 3.800 3.800 .8 6.800" stroke="#777" stroke-width="1.300" fill="none"/></svg>
<svg class="b" style="left:331px;top:159px;" width="5" height="8" viewBox="0 0 5 8"><path d="M.8 .8 3.800 3.800 .8 6.800" stroke="#777" stroke-width="1.300" fill="none"/></svg>
<svg class="b" style="left:408px;top:159px;" width="5" height="8" viewBox="0 0 5 8"><path d="M.8 .8 3.800 3.800 .8 6.800" stroke="#777" stroke-width="1.300" fill="none"/></svg>
<span class="t s" style="left:228.40px;top:154.64px;font-size:12px;line-height:17px;letter-spacing:-0.247px;color:#000;">Telegram Desktop</span>
<span class="t s" style="left:345.40px;top:154.64px;font-size:12px;line-height:17px;letter-spacing:-0.350px;color:#000;transform:scaleX(0.8900);transform-origin:0 0;">HTB_CPTS</span>
<span class="t s" style="left:422.50px;top:154.64px;font-size:12px;line-height:17px;letter-spacing:-0.350px;color:#000;transform:scaleX(0.8900);transform-origin:0 0;">HTB_CPTS</span>
<svg class="b" style="left:613px;top:161px;" width="10" height="7" viewBox="0 0 10 7"><path d="M.8 .8 5 5 9.200 .8" stroke="#555" stroke-width="1.500" fill="none"/></svg>
<svg class="b" style="left:629px;top:157px;" width="12" height="13" viewBox="0 0 12 13"><path d="M9.300 3.400A4.300 4.300 0 1 0 10.300 7.400" stroke="#666" stroke-width="1.400" fill="none"/><path d="M6.200 3.900h3.600V.4" stroke="#666" stroke-width="1.400" fill="none"/></svg>
<div class="b" style="left:655px;top:152px;width:170px;height:22px;background:#fff;border:1px solid #d9d9d9;box-sizing:border-box;"></div>
<span class="t s" style="left:664.20px;top:154.64px;font-size:12px;line-height:17px;letter-spacing:-0.350px;color:#6d6d6d;transform:scaleX(0.9260);transform-origin:0 0;">Search HTB_CPTS</span>
<svg class="b" style="left:804px;top:157px;" width="13" height="13" viewBox="0 0 13 13"><circle cx="8" cy="5" r="3.600" stroke="#555" stroke-width="1.500" fill="none"/><path d="M5.500 7.500 1 12" stroke="#555" stroke-width="1.800"/></svg>
<span class="t s" style="left:8.00px;top:180.96px;font-size:15.4px;line-height:22px;letter-spacing:-0.350px;color:#10218b;font-weight:700;transform:scaleX(0.9369);transform-origin:0 0;">EPSON</span>
<span class="t s" style="left:65.50px;top:183.64px;font-size:12px;line-height:17px;letter-spacing:-0.252px;color:#000;">Easy Photo Print</span>
<svg class="b" style="left:160px;top:190px;" width="7" height="4" viewBox="0 0 7 4"><path d="M0 0h7L3.5 4z" fill="#111"/></svg>
<div class="b" style="left:174px;top:184px;width:15px;height:15px;background:#1f8a2e;border-radius:50%;border:1px solid #126a1f;box-sizing:border-box;"></div>
<svg class="b" style="left:177px;top:187px;" width="9" height="9" viewBox="0 0 9 9"><rect x="2" y=".5" width="5" height="2.500" fill="none" stroke="#fff"/><rect x=".5" y="3" width="8" height="4" rx=".5" fill="none" stroke="#fff"/><rect x="2.500" y="5.500" width="4" height="3" fill="#1f8a2e" stroke="#fff"/></svg>
<span class="t s" style="left:194.60px;top:183.64px;font-size:12px;line-height:17px;letter-spacing:-0.006px;color:#000;">Photo Print</span>
<div class="b" style="left:0px;top:201px;width:837px;height:1px;background:#e5e5e5;"></div>
<svg class="b" style="left:34px;top:205.5px;" width="12" height="16" viewBox="0 0 12 16"><path d="M.5.5h8l3 3v12H.5z" fill="#fff" stroke="#8a8a8a"/><path d="M8.500.5v3h3" fill="none" stroke="#8a8a8a"/><path d="M2.500 4.500h4M2.500 6.500h3" stroke="#2a7fd6"/><path d="M2.500 8.500h7M2.500 10.500h7M2.500 12.500h7" stroke="#7a7a7a"/><path d="M6 8v5" stroke="#fff"/></svg>
<span class="t s" style="left:53.30px;top:205.64px;font-size:12px;line-height:17px;letter-spacing:0.013px;color:#000;">Documents</span>
<svg class="b" style="left:156px;top:208.0px;" width="11" height="11" viewBox="0 0 11 11"><path d="M6.600.4 10.600 4.400 9.500 5.400l-.9-.4-1.600 1.600.4 2.200-1.100 1L4.300 7.700 1.100 10.900.4 10.600l3-3.400L1.200 5l1-1.100 2.200.4L6 2.700l-.4-.9z" fill="#84898f"/></svg>
<svg class="b" style="left:32px;top:231.5px;" width="16" height="12" viewBox="0 0 16 12"><rect x=".5" y=".5" width="15" height="11" fill="#fff" stroke="#8a8a8a"/><rect x="2" y="2" width="12" height="8" fill="#bfe3f6"/><path d="M2 10V7.500c3-2 6-1 12 0V10z" fill="#3f7a52"/><path d="M2 6.500c4-1.500 8-.5 12 .8V8C9 6.800 6 6.500 2 8z" fill="#2b5d7a"/></svg>
<span class="t s" style="left:53.30px;top:229.64px;font-size:12px;line-height:17px;letter-spacing:-0.292px;color:#000;">Pictures</span>
<svg class="b" style="left:156px;top:232.0px;" width="11" height="11" viewBox="0 0 11 11"><path d="M6.600.4 10.600 4.400 9.500 5.400l-.9-.4-1.600 1.600.4 2.200-1.100 1L4.300 7.700 1.100 10.900.4 10.600l3-3.400L1.200 5l1-1.100 2.200.4L6 2.700l-.4-.9z" fill="#84898f"/></svg>
<svg class="b" style="left:34px;top:253.5px;" width="13" height="16" viewBox="0 0 13 16"><defs><linearGradient id="fg" x1="0" y1="0" x2="1" y2="1"><stop offset="0" stop-color="#fff3c4"/><stop offset="1" stop-color="#ffdf85"/></linearGradient></defs>
<rect x=".5" y=".5" width="11" height="15" fill="url(#fg)" stroke="#f0cd55" stroke-width="1"/>
<rect x="10.5" y="9.5" width="2" height="6" fill="#ffe9a6" stroke="#ebc553" stroke-width="1"/></svg>
<span class="t s" style="left:53.30px;top:253.64px;font-size:12px;line-height:17px;letter-spacing:-0.627px;color:#000;">leaks</span>
<svg class="b" style="left:156px;top:256.0px;" width="11" height="11" viewBox="0 0 11 11"><path d="M6.600.4 10.600 4.400 9.500 5.400l-.9-.4-1.600 1.600.4 2.200-1.100 1L4.300 7.700 1.100 10.900.4 10.600l3-3.400L1.200 5l1-1.100 2.200.4L6 2.700l-.4-.9z" fill="#84898f"/></svg>
<svg class="b" style="left:34px;top:277.5px;" width="13" height="16" viewBox="0 0 13 16"><defs><linearGradient id="fg" x1="0" y1="0" x2="1" y2="1"><stop offset="0" stop-color="#fff3c4"/><stop offset="1" stop-color="#ffdf85"/></linearGradient></defs>
<rect x=".5" y=".5" width="11" height="15" fill="url(#fg)" stroke="#f0cd55" stroke-width="1"/>
<rect x="10.5" y="9.5" width="2" height="6" fill="#ffe9a6" stroke="#ebc553" stroke-width="1"/></svg>
<span class="t s" style="left:53.30px;top:277.64px;font-size:12px;line-height:17px;color:#000;">probar</span>
<svg class="b" style="left:34px;top:301.5px;" width="13" height="16" viewBox="0 0 13 16"><defs><linearGradient id="fg" x1="0" y1="0" x2="1" y2="1"><stop offset="0" stop-color="#fff3c4"/><stop offset="1" stop-color="#ffdf85"/></linearGradient></defs>
<rect x=".5" y=".5" width="11" height="15" fill="url(#fg)" stroke="#f0cd55" stroke-width="1"/>
<rect x="10.5" y="9.5" width="2" height="6" fill="#ffe9a6" stroke="#ebc553" stroke-width="1"/></svg>
<span class="t s" style="left:53.30px;top:301.64px;font-size:12px;line-height:17px;letter-spacing:-0.431px;color:#000;">Screenshots</span>
<svg class="b" style="left:34px;top:325.5px;" width="13" height="16" viewBox="0 0 13 16"><defs><linearGradient id="fg" x1="0" y1="0" x2="1" y2="1"><stop offset="0" stop-color="#fff3c4"/><stop offset="1" stop-color="#ffdf85"/></linearGradient></defs>
<rect x=".5" y=".5" width="11" height="15" fill="url(#fg)" stroke="#f0cd55" stroke-width="1"/>
<rect x="10.5" y="9.5" width="2" height="6" fill="#ffe9a6" stroke="#ebc553" stroke-width="1"/></svg>
<span class="t s" style="left:53.30px;top:325.64px;font-size:12px;line-height:17px;letter-spacing:-0.221px;color:#000;">Telegram Desktop</span>
<svg class="b" style="left:34px;top:349.5px;" width="13" height="16" viewBox="0 0 13 16"><defs><linearGradient id="fg" x1="0" y1="0" x2="1" y2="1"><stop offset="0" stop-color="#fff3c4"/><stop offset="1" stop-color="#ffdf85"/></linearGradient></defs>
<rect x=".5" y=".5" width="11" height="15" fill="url(#fg)" stroke="#f0cd55" stroke-width="1"/>
<rect x="10.5" y="9.5" width="2" height="6" fill="#ffe9a6" stroke="#ebc553" stroke-width="1"/></svg>
<span class="t s" style="left:53.30px;top:349.64px;font-size:12px;line-height:17px;letter-spacing:0.016px;color:#000;">verificado</span>
<svg class="b" style="left:24px;top:384px;" width="17" height="11" viewBox="0 0 17 11"><path d="M4.200 10.500h9.300a3 3 0 0 0 .6-5.900A4.200 4.200 0 0 0 6.300 3.200 3.600 3.600 0 0 0 1 6.400a2.300 2.300 0 0 0 .2 4.100z" fill="#1673c9"/><path d="M6.300 3.200a4.200 4.200 0 0 1 7.800 1.400L8.500 7.500z" fill="#2a90e6"/></svg>
<span class="t s" style="left:45.40px;top:381.64px;font-size:12px;line-height:17px;letter-spacing:-0.245px;color:#000;">OneDrive - Personal</span>
<svg class="b" style="left:24px;top:415px;" width="17" height="15" viewBox="0 0 17 15"><rect x=".5" y=".5" width="16" height="10" fill="#6fc3f2" stroke="#3b8fd0"/><path d="M1 1h15L1 10z" fill="#8fd3f7"/><path d="M6.500 11v2h4v-2M3 14h11" stroke="#8a9aa6" stroke-width="1.200" fill="none"/></svg>
<span class="t s" style="left:45.40px;top:413.64px;font-size:12px;line-height:17px;letter-spacing:-0.729px;color:#000;">This PC</span>
<svg class="b" style="left:31.5px;top:438px;" width="17" height="16" viewBox="0 0 17 16"><path d="M8.500.5 16 3.500v9L8.500 15.500 1 12.500v-9z" fill="#3ab8d8"/><path d="M8.500.5 16 3.500 8.500 6.800 1 3.500z" fill="#9fe6f3"/><path d="M8.500 6.800V15.500L1 12.500v-9z" fill="#c9f1f7"/><path d="M8.500 6.800 16 3.500v9L8.500 15.500z" fill="#1d8fb5"/></svg>
<span class="t s" style="left:53.30px;top:437.64px;font-size:12px;line-height:17px;letter-spacing:-0.295px;color:#000;">3D Objects</span>
<svg class="b" style="left:32px;top:464px;" width="16" height="12" viewBox="0 0 16 12"><rect x="0" y="0" width="16" height="12" rx=".5" fill="#1e8fe6"/><path d="M0 0h16L0 10z" fill="#3aa3f0"/><rect x="0" y="10" width="16" height="2" fill="#0f6fc0"/><path d="M1.500 11h1M13.500 11h1" stroke="#fff" stroke-width=".8"/></svg>
<span class="t s" style="left:53.30px;top:461.64px;font-size:12px;line-height:17px;letter-spacing:-0.353px;color:#000;">Desktop</span>
<svg class="b" style="left:34px;top:486px;" width="12" height="16" viewBox="0 0 12 16"><path d="M.5.5h8l3 3v12H.5z" fill="#fff" stroke="#8a8a8a"/><path d="M8.500.5v3h3" fill="none" stroke="#8a8a8a"/><path d="M2.500 4.500h4M2.500 6.500h3" stroke="#2a7fd6"/><path d="M2.500 8.500h7M2.500 10.500h7M2.500 12.500h7" stroke="#7a7a7a"/><path d="M6 8v5" stroke="#fff"/></svg>
<span class="t s" style="left:53.30px;top:485.64px;font-size:12px;line-height:17px;letter-spacing:0.013px;color:#000;">Documents</span>
<svg class="b" style="left:32px;top:510px;" width="16" height="16" viewBox="0 0 16 16"><path d="M5.500.5h5v7h4.500L8 15.500 1 7.500h4.500z" fill="#2f8de4"/></svg>
<span class="t s" style="left:53.30px;top:509.64px;font-size:12px;line-height:17px;letter-spacing:-0.095px;color:#000;">Downloads</span>
<svg class="b" style="left:34px;top:534px;" width="12" height="17" viewBox="0 0 12 17"><path d="M5 .5h1.600c.6 2.600 4.400 3.600 4.400 7.600 0 1.600-.8 3-1.800 3.900.9-3-1-4.800-2.600-5.300v6.800a3 2.600 0 1 1-1.600-2.300z" fill="#0d9cf0"/></svg>
<span class="t s" style="left:53.30px;top:533.64px;font-size:12px;line-height:17px;letter-spacing:-0.133px;color:#000;">Music</span>
<svg class="b" style="left:32px;top:560px;" width="16" height="12" viewBox="0 0 16 12"><rect x=".5" y=".5" width="15" height="11" fill="#fff" stroke="#8a8a8a"/><rect x="2" y="2" width="12" height="8" fill="#bfe3f6"/><path d="M2 10V7.500c3-2 6-1 12 0V10z" fill="#3f7a52"/><path d="M2 6.500c4-1.500 8-.5 12 .8V8C9 6.800 6 6.500 2 8z" fill="#2b5d7a"/></svg>
<span class="t s" style="left:53.30px;top:557.64px;font-size:12px;line-height:17px;letter-spacing:-0.235px;color:#000;">Pictures</span>
<svg class="b" style="left:33px;top:582.5px;" width="14" height="15" viewBox="0 0 14 15"><rect x="0" y="0" width="14" height="15" fill="#4a4a4a"/><rect x="3" y="1" width="8" height="6" fill="#e0a43a"/><rect x="3" y="8" width="8" height="6" fill="#3a62c8"/><path d="M1.500 1v13M12.500 1v13" stroke="#ddd" stroke-width="1.200" stroke-dasharray="1.500 1.500"/><circle cx="7" cy="4" r="1.500" fill="#c33"/><path d="M4 13l3-3.500 3 3.500z" fill="#6a4"/></svg>
<span class="t s" style="left:53.30px;top:581.64px;font-size:12px;line-height:17px;letter-spacing:-0.396px;color:#000;">Videos</span>
<svg class="b" style="left:31.5px;top:606px;" width="17" height="15" viewBox="0 0 17 15"><g fill="#1aa0ea"><rect x="0" y="0" width="2.200" height="2.200"/><rect x="2.800" y="0" width="2.200" height="2.200"/><rect x="0" y="2.800" width="2.200" height="2.200"/><rect x="2.800" y="2.800" width="2.200" height="2.200"/></g><g transform="translate(1,4)"><path d="M1.500 0h11l1.500 3H0z" fill="#dcdcdc"/><rect x="0" y="3" width="14" height="4" rx=".6" fill="#3a3a3a"/><rect x="10.500" y="4.500" width="2" height="1" fill="#3be04a"/></g></svg>
<span class="t s" style="left:53.30px;top:605.64px;font-size:12px;line-height:17px;letter-spacing:-0.306px;color:#000;">Local Disk (C:)</span>
<svg class="b" style="left:33px;top:637px;" width="14" height="7" viewBox="0 0 14 7"><path d="M1.500 0h11l1.500 3H0z" fill="#dcdcdc"/><rect x="0" y="3" width="14" height="4" rx=".6" fill="#3a3a3a"/><rect x="10.500" y="4.500" width="2" height="1" fill="#3be04a"/></svg>
<span class="t s" style="left:53.30px;top:629.64px;font-size:12px;line-height:17px;letter-spacing:-0.345px;color:#000;">01-Varios (D:)</span>
<div class="b" style="left:0px;top:650px;width:171px;height:24px;background:#d9d9d9;"></div>
<svg class="b" style="left:33px;top:661px;" width="14" height="7" viewBox="0 0 14 7"><path d="M1.500 0h11l1.500 3H0z" fill="#dcdcdc"/><rect x="0" y="3" width="14" height="4" rx=".6" fill="#3a3a3a"/><rect x="10.500" y="4.500" width="2" height="1" fill="#3be04a"/></svg>
<span class="t s" style="left:53.30px;top:653.64px;font-size:12px;line-height:17px;letter-spacing:-0.153px;color:#000;">01-Utilitarios (E:)</span>
<svg class="b" style="left:33px;top:685px;" width="14" height="7" viewBox="0 0 14 7"><path d="M1.500 0h11l1.500 3H0z" fill="#dcdcdc"/><rect x="0" y="3" width="14" height="4" rx=".6" fill="#3a3a3a"/><rect x="10.500" y="4.500" width="2" height="1" fill="#3be04a"/></svg>
<span class="t s" style="left:53.30px;top:677.64px;font-size:12px;line-height:17px;letter-spacing:-0.257px;color:#000;">03 - Dnuevo (F:)</span>
<div class="b" style="left:33px;top:709.5px;width:8px;height:1.5px;background:#3a9ad9;"></div>
<div class="b" style="left:171px;top:202px;width:16px;height:509px;background:#f0f0f0;"></div>
<div class="b" style="left:171px;top:278px;width:15px;height:367px;background:#cdcdcd;"></div>
<svg class="b" style="left:175px;top:208px;" width="8" height="6" viewBox="0 0 8 6"><path d="M.6 5 4 1.600 7.400 5" stroke="#505050" stroke-width="1.600" fill="none"/></svg>
<svg class="b" style="left:175px;top:699px;" width="8" height="6" viewBox="0 0 8 6"><path d="M.6 1 4 4.400 7.400 1" stroke="#505050" stroke-width="1.600" fill="none"/></svg>
<div class="b" style="left:189px;top:202px;width:1px;height:509px;background:#f5f5f5;"></div>
<span class="t s" style="left:208.60px;top:206.64px;font-size:12px;line-height:17px;letter-spacing:-0.072px;color:#4c607a;">Name</span>
<span class="t s" style="left:468.90px;top:206.64px;font-size:12px;line-height:17px;letter-spacing:0.072px;color:#4c607a;">Date modified</span>
<span class="t s" style="left:613.30px;top:206.64px;font-size:12px;line-height:17px;letter-spacing:-0.705px;color:#4c607a;">Type</span>
<span class="t s" style="left:733.20px;top:206.64px;font-size:12px;line-height:17px;letter-spacing:-0.350px;color:#4c607a;transform:scaleX(0.8883);transform-origin:0 0;">Size</span>
<div class="b" style="left:462px;top:202px;width:1px;height:25px;background:#e5e5e5;"></div>
<div class="b" style="left:606px;top:202px;width:1px;height:25px;background:#e5e5e5;"></div>
<div class="b" style="left:726px;top:202px;width:1px;height:25px;background:#e5e5e5;"></div>
<div class="b" style="left:806px;top:202px;width:1px;height:25px;background:#e5e5e5;"></div>
<svg class="b" style="left:329px;top:202px;" width="9" height="5" viewBox="0 0 9 5"><path d="M.5 4.500 4.500 .7 8.500 4.500" stroke="#7a7a7a" stroke-width="1" fill="none"/></svg>
<svg class="b" style="left:211px;top:235px;" width="13" height="16" viewBox="0 0 13 16"><defs><linearGradient id="fg" x1="0" y1="0" x2="1" y2="1"><stop offset="0" stop-color="#fff3c4"/><stop offset="1" stop-color="#ffdf85"/></linearGradient></defs>
<rect x=".5" y=".5" width="11" height="15" fill="url(#fg)" stroke="#f0cd55" stroke-width="1"/>
<rect x="10.5" y="9.5" width="2" height="6" fill="#ffe9a6" stroke="#ebc553" stroke-width="1"/></svg>
<span class="t s" style="left:229.60px;top:235.64px;font-size:12px;line-height:17px;letter-spacing:-0.142px;color:#000;">.obsidian</span>
<span class="t s" style="left:468.90px;top:235.64px;font-size:12px;line-height:17px;letter-spacing:-0.353px;color:#6d6d6d;">28/9/2023 09:33</span>
<span class="t s" style="left:613.30px;top:235.64px;font-size:12px;line-height:17px;letter-spacing:-0.089px;color:#6d6d6d;">File folder</span>
<svg class="b" style="left:211px;top:256px;" width="13" height="16" viewBox="0 0 13 16"><defs><linearGradient id="fg" x1="0" y1="0" x2="1" y2="1"><stop offset="0" stop-color="#fff3c4"/><stop offset="1" stop-color="#ffdf85"/></linearGradient></defs>
<rect x=".5" y=".5" width="11" height="15" fill="url(#fg)" stroke="#f0cd55" stroke-width="1"/>
<rect x="10.5" y="9.5" width="2" height="6" fill="#ffe9a6" stroke="#ebc553" stroke-width="1"/></svg>
<span class="t s" style="left:229.60px;top:256.64px;font-size:12px;line-height:17px;letter-spacing:-0.136px;color:#000;">Academy</span>
<span class="t s" style="left:468.90px;top:256.64px;font-size:12px;line-height:17px;letter-spacing:-0.290px;color:#6d6d6d;">6/1/2023 14:07</span>
<span class="t s" style="left:613.30px;top:256.64px;font-size:12px;line-height:17px;letter-spacing:-0.089px;color:#6d6d6d;">File folder</span>
<svg class="b" style="left:211px;top:277px;" width="13" height="16" viewBox="0 0 13 16"><defs><linearGradient id="fg" x1="0" y1="0" x2="1" y2="1"><stop offset="0" stop-color="#fff3c4"/><stop offset="1" stop-color="#ffdf85"/></linearGradient></defs>
<rect x=".5" y=".5" width="11" height="15" fill="url(#fg)" stroke="#f0cd55" stroke-width="1"/>
<rect x="10.5" y="9.5" width="2" height="6" fill="#ffe9a6" stroke="#ebc553" stroke-width="1"/></svg>
<span class="t s" style="left:229.60px;top:277.64px;font-size:12px;line-height:17px;letter-spacing:-0.304px;color:#000;">Challenges</span>
<span class="t s" style="left:468.90px;top:277.64px;font-size:12px;line-height:17px;letter-spacing:-0.353px;color:#6d6d6d;">28/8/2022 13:36</span>
<span class="t s" style="left:613.30px;top:277.64px;font-size:12px;line-height:17px;letter-spacing:-0.089px;color:#6d6d6d;">File folder</span>
<svg class="b" style="left:211px;top:298px;" width="13" height="16" viewBox="0 0 13 16"><defs><linearGradient id="fg" x1="0" y1="0" x2="1" y2="1"><stop offset="0" stop-color="#fff3c4"/><stop offset="1" stop-color="#ffdf85"/></linearGradient></defs>
<rect x=".5" y=".5" width="11" height="15" fill="url(#fg)" stroke="#f0cd55" stroke-width="1"/>
<rect x="10.5" y="9.5" width="2" height="6" fill="#ffe9a6" stroke="#ebc553" stroke-width="1"/></svg>
<span class="t s" style="left:229.60px;top:298.64px;font-size:12px;line-height:17px;letter-spacing:-0.137px;color:#000;">Machines</span>
<span class="t s" style="left:468.90px;top:298.64px;font-size:12px;line-height:17px;letter-spacing:-0.353px;color:#6d6d6d;">31/8/2022 04:17</span>
<span class="t s" style="left:613.30px;top:298.64px;font-size:12px;line-height:17px;letter-spacing:-0.089px;color:#6d6d6d;">File folder</span>
<svg class="b" style="left:211px;top:319px;" width="13" height="16" viewBox="0 0 13 16"><defs><linearGradient id="fg" x1="0" y1="0" x2="1" y2="1"><stop offset="0" stop-color="#fff3c4"/><stop offset="1" stop-color="#ffdf85"/></linearGradient></defs>
<rect x=".5" y=".5" width="11" height="15" fill="url(#fg)" stroke="#f0cd55" stroke-width="1"/>
<rect x="10.5" y="9.5" width="2" height="6" fill="#ffe9a6" stroke="#ebc553" stroke-width="1"/></svg>
<span class="t s" style="left:229.60px;top:319.64px;font-size:12px;line-height:17px;letter-spacing:-0.518px;color:#000;">Pro Labs</span>
<span class="t s" style="left:468.90px;top:319.64px;font-size:12px;line-height:17px;letter-spacing:-0.353px;color:#6d6d6d;">31/8/2022 04:17</span>
<span class="t s" style="left:613.30px;top:319.64px;font-size:12px;line-height:17px;letter-spacing:-0.089px;color:#6d6d6d;">File folder</span>
<svg class="b" style="left:211px;top:340.5px;" width="12" height="15" viewBox="0 0 12 15"><path d="M.5.5h7.500l3 3v11H.5z" fill="#fff" stroke="#a8a8a8"/><path d="M8 .5v3h3" fill="none" stroke="#a8a8a8"/><path d="M4 5.500h3v3h1.800L5.500 12 2.200 8.500H4z" fill="#2b7fc4"/></svg>
<span class="t s" style="left:229.60px;top:340.64px;font-size:12px;line-height:17px;letter-spacing:-0.441px;color:#000;">HTB.md</span>
<span class="t s" style="left:468.90px;top:340.64px;font-size:12px;line-height:17px;letter-spacing:-0.353px;color:#6d6d6d;">31/8/2022 04:17</span>
<span class="t s" style="left:613.30px;top:340.64px;font-size:12px;line-height:17px;letter-spacing:-0.066px;color:#6d6d6d;">Archivo de origen ...</span>
<span class="t s" style="left:777.20px;top:340.64px;font-size:12px;line-height:17px;color:#6d6d6d;">1</span>
<span class="t s" style="left:786.20px;top:340.64px;font-size:12px;line-height:17px;letter-spacing:-0.350px;color:#6d6d6d;transform:scaleX(0.8175);transform-origin:0 0;">KB</span>
<span class="t s" style="left:14.10px;top:714.64px;font-size:12px;line-height:17px;letter-spacing:-0.129px;color:#1e395b;">6 items</span>
<div class="b" style="left:62px;top:717px;width:1px;height:12px;background:#e5e5e5;"></div>
<div class="b" style="left:789px;top:711px;width:22px;height:23px;background:#cde8f5;border:1px solid #26a0da;box-sizing:border-box;"></div>
<svg class="b" style="left:793px;top:716px;" width="17" height="13" viewBox="0 0 17 13"><rect x=".5" y=".5" width="4.500" height="12" fill="#fff" stroke="#8f8f8f"/><path d="M.5 4.500h4.500M.5 8.500h4.500" stroke="#8f8f8f"/><rect x="2" y="2" width="1.300" height="1.300" fill="#3a7a4a"/><rect x="2" y="6" width="1.300" height="1.300" fill="#4a7fe0"/><rect x="2" y="10" width="1.300" height="1.300" fill="#e02020"/><path d="M6.200 2.500h3.800M12.200 2.500h3.800M6.200 6.500h3.800M12.200 6.500h3.800M6.200 10.500h3.800M12.200 10.500h3.800" stroke="#6a6a6a" stroke-width="1"/></svg>
<svg class="b" style="left:815px;top:716px;" width="14" height="11" viewBox="0 0 14 11"><rect x=".5" y=".5" width="13" height="10" fill="#fff" stroke="#999"/><rect x="2" y="2" width="10" height="7" fill="#5a9be8"/><path d="M2 9V5.500c3-1.500 6-1 10 1V9z" fill="#3f7a52"/><path d="M2 9V7.500c4-.8 7-.3 10 .5V9z" fill="#2b5d9a"/></svg>
</div>
<div id="np" class="b" style="left:602px;top:301px;width:257px;height:334px">
<svg class="b" style="left:8px;top:6px;" width="16" height="16" viewBox="0 0 16 16"><path d="M3.5 2.5h10.5l.5 12.5H4.2z" fill="#f3ead6" stroke="#b9a77f" stroke-width=".8"/>
<path d="M2.6 2h10.2l-.9 11.6H.9z" fill="#b7e0ef" stroke="#5fa9c6" stroke-width=".8"/>
<path d="M2.6 4.2h9.6M2.4 6.1h9.6M2.2 8h9.6M2 9.9h9.6M1.8 11.8h9.6" stroke="#7dbdd6" stroke-width=".7"/>
<path d="M3.2 1.9l.7-1.2.7 1.2.7-1.2.7 1.2.7-1.2.7 1.2.7-1.2.7 1.2.7-1.2.7 1.2.7-1.2.7 1.2" stroke="#555" stroke-width=".7" fill="none"/></svg>
<span class="t s" style="left:29.00px;top:6.64px;font-size:12px;line-height:17px;letter-spacing:-0.411px;color:#000;">*LICENSE.txt - ...</span>
<div class="b" style="left:138px;top:14px;width:10px;height:1px;background:#000;"></div>
<div class="b" style="left:183px;top:9px;width:10px;height:10px;border:1px solid #000;box-sizing:border-box;"></div>
<svg class="b" style="left:229px;top:9px;" width="10" height="10" viewBox="0 0 10 10"><path d="M0 0 10 10M10 0 0 10" stroke="#000" stroke-width="1.1"/></svg>
<span class="t s" style="left:7.40px;top:31.64px;font-size:12px;line-height:17px;letter-spacing:-0.244px;color:#000;">File</span>
<span class="t s" style="left:39.00px;top:31.64px;font-size:12px;line-height:17px;letter-spacing:-0.125px;color:#000;">Edit</span>
<span class="t s" style="left:73.30px;top:31.64px;font-size:12px;line-height:17px;letter-spacing:-0.061px;color:#000;">Format</span>
<span class="t s" style="left:124.90px;top:31.64px;font-size:12px;line-height:17px;letter-spacing:-0.241px;color:#000;">View</span>
<span class="t s" style="left:164.50px;top:31.64px;font-size:12px;line-height:17px;letter-spacing:-0.195px;color:#000;">Help</span>
<div class="b" style="left:0px;top:48px;width:257px;height:2px;background:#f0f0f0;"></div>
<div class="b" style="left:241px;top:50px;width:16px;height:262px;background:#f0f0f0;"></div>
<svg class="b" style="left:244px;top:56px;" width="9" height="6" viewBox="0 0 9 6"><path d="M.7 5.3 4.5 1.5 8.3 5.3" stroke="#c0c0c0" stroke-width="1.5" fill="none"/></svg>
<svg class="b" style="left:244px;top:299px;" width="9" height="6" viewBox="0 0 9 6"><path d="M.7 .7 4.5 4.5 8.3 .7" stroke="#c0c0c0" stroke-width="1.5" fill="none"/></svg>
<span class="t d" style="left:4.30px;top:68.20px;font-size:13.3px;line-height:19px;color:#000;letter-spacing:-0.007px;">verified by flei1n -Syrelia</span>
<span class="t d" style="left:4.30px;top:104.20px;font-size:13.3px;line-height:19px;color:#000;letter-spacing:-0.007px;">play hello charlotte!!!</span>
<span class="t d" style="left:4.30px;top:140.20px;font-size:13.3px;line-height:19px;color:#000;letter-spacing:-0.007px;">or</span>
<span class="t d" style="left:4.30px;top:176.20px;font-size:13.3px;line-height:19px;color:#000;letter-spacing:-0.007px;">just wiew/read i love amy</span>
<div class="b" style="left:0px;top:311px;width:257px;height:1px;background:#d7d7d7;"></div>
<div class="b" style="left:0px;top:312px;width:257px;height:22px;background:#f0f0f0;"></div>
<div class="b" style="left:0;top:312px;width:16px;height:22px;overflow:hidden"><span class="t s" style="left:5.80px;top:3.64px;font-size:12px;line-height:17px;color:#000;letter-spacing:-.5px;">100%</span></div>
<div class="b" style="left:16px;top:313px;width:1px;height:20px;background:#d7d7d7;"></div>
<span class="t s" style="left:24.30px;top:315.64px;font-size:12px;line-height:17px;letter-spacing:-0.419px;color:#000;">Windows (CRLF)</span>
<div class="b" style="left:136px;top:313px;width:1px;height:20px;background:#d7d7d7;"></div>
<span class="t s" style="left:144.30px;top:315.64px;font-size:12px;line-height:17px;letter-spacing:-0.350px;color:#000;transform:scaleX(0.9265);transform-origin:0 0;">UTF-8</span>
<svg class="b" style="left:248px;top:325px;" width="8" height="8" viewBox="0 0 8 8"><g fill="#bfbfbf"><rect x="6" y="6" width="2" height="2"/><rect x="3" y="6" width="2" height="2"/><rect x="0" y="6" width="2" height="2"/><rect x="6" y="3" width="2" height="2"/><rect x="3" y="3" width="2" height="2"/><rect x="6" y="0" width="2" height="2"/></g></svg>
</div>
</body></html>
